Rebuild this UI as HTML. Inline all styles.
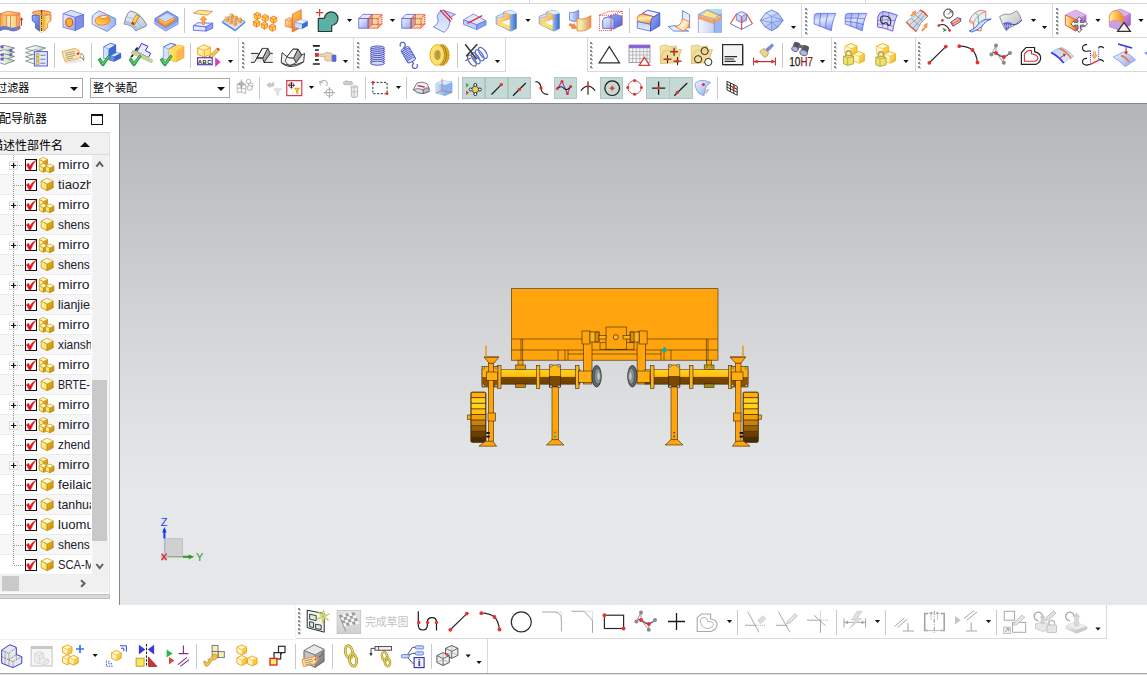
<!DOCTYPE html>
<html lang="zh-CN">
<head>
<meta charset="utf-8">
<title>NX</title>
<style>
html,body{margin:0;padding:0;}
body{width:1147px;height:675px;position:relative;overflow:hidden;background:#fff;font-family:"Liberation Sans","Noto Sans CJK SC",sans-serif;font-size:12px;color:#000;}
.abs{position:absolute;}
.hl{position:absolute;height:1px;background:#d9d9d9;}
.vl{position:absolute;width:1px;background:#d9d9d9;}
#view{position:absolute;left:120px;top:104px;width:1027px;height:501px;background:linear-gradient(to bottom,#b3b5b7 0%,#c2c3c5 20%,#d4d5d6 45%,#e2e3e4 68%,#e6e7e8 77%,#e6e7e8 100%);}
.combo{position:absolute;top:78px;height:18px;border:1px solid #a9a9a9;background:#fff;box-sizing:content-box;}
.combo span{position:absolute;top:1px;font-size:11px;line-height:16px;white-space:nowrap;}
.combo i{position:absolute;right:4.4px;top:7.6px;width:0;height:0;border-left:4.2px solid transparent;border-right:4.2px solid transparent;border-top:4.6px solid #111;}
#nav{position:absolute;left:0;top:104px;width:119px;height:501px;background:#fff;overflow:hidden;}
.row{position:absolute;left:0;width:91px;height:19px;border-bottom:1px solid #ececec;overflow:hidden;}
.row span{position:absolute;left:58px;top:2px;font-size:13px;line-height:16px;color:#20202e;white-space:nowrap;transform-origin:0 50%;}
#done{position:absolute;z-index:5;left:365px;top:614px;font-size:11px;line-height:16px;color:#c2c2c2;white-space:nowrap;letter-spacing:-0.2px}
</style>
</head>
<body>
<!-- toolbar row borders -->
<div class="hl" style="left:0;top:3px;width:1147px"></div>
<div class="hl" style="left:0;top:37px;width:1147px"></div>
<div class="hl" style="left:0;top:71px;width:1147px"></div>
<div class="abs" style="left:0;top:103px;width:1147px;height:1px;background:#7d8a92"></div>
<div class="abs" style="left:119px;top:104px;width:1px;height:501px;background:#7d8a92"></div>

<div id="view"></div>

<!-- selection filter combos -->
<div class="combo" style="left:-8px;width:89px"><span style="left:3.3px">过滤器</span><i></i></div>
<div class="combo" style="left:90px;width:138px"><span style="left:2px">整个装配</span><i></i></div>

<!-- assembly navigator -->
<div id="nav">
  <div class="abs" style="left:-1px;top:7.1px;font-size:12px;line-height:16px;white-space:nowrap">配导航器</div>
  <div class="abs" style="left:91px;top:10px;width:10px;height:8px;border:1px solid #111;border-top:2px solid #111"></div>
  <div class="abs" style="left:-1px;top:28px;width:109px;height:21px;background:#f0f0f0;border:1px solid #dcdcdc"></div>
  <div class="abs" style="left:-9px;top:34px;font-size:12px;line-height:16px;white-space:nowrap">描述性部件名</div>
  <div class="abs" style="left:79.8px;top:37.8px;width:0;height:0;border-left:5.6px solid transparent;border-right:5.6px solid transparent;border-bottom:5.8px solid #111"></div>
  <div class="row" style="top:51px;background:#fff"><span style="transform:scaleX(1.064)">mirro</span></div><div class="row" style="top:71px;background:#f7f7f7"><span style="transform:scaleX(1.02)">tiaozh</span></div><div class="row" style="top:91px;background:#fff"><span style="transform:scaleX(1.064)">mirro</span></div><div class="row" style="top:111px;background:#f7f7f7"><span style="transform:scaleX(0.916)">shens</span></div><div class="row" style="top:131px;background:#fff"><span style="transform:scaleX(1.064)">mirro</span></div><div class="row" style="top:151px;background:#f7f7f7"><span style="transform:scaleX(0.916)">shens</span></div><div class="row" style="top:171px;background:#fff"><span style="transform:scaleX(1.064)">mirro</span></div><div class="row" style="top:191px;background:#f7f7f7"><span style="transform:scaleX(0.957)">lianjie</span></div><div class="row" style="top:211px;background:#fff"><span style="transform:scaleX(1.064)">mirro</span></div><div class="row" style="top:231px;background:#f7f7f7"><span style="transform:scaleX(0.917)">xiansh</span></div><div class="row" style="top:251px;background:#fff"><span style="transform:scaleX(1.064)">mirro</span></div><div class="row" style="top:271px;background:#f7f7f7"><span style="transform:scaleX(0.82)">BRTE-</span></div><div class="row" style="top:291px;background:#fff"><span style="transform:scaleX(1.064)">mirro</span></div><div class="row" style="top:311px;background:#f7f7f7"><span style="transform:scaleX(1.064)">mirro</span></div><div class="row" style="top:331px;background:#fff"><span style="transform:scaleX(0.904)">zhend</span></div><div class="row" style="top:351px;background:#f7f7f7"><span style="transform:scaleX(1.064)">mirro</span></div><div class="row" style="top:371px;background:#fff"><span style="transform:scaleX(1.04)">feilaic</span></div><div class="row" style="top:391px;background:#f7f7f7"><span style="transform:scaleX(0.95)">tanhua</span></div><div class="row" style="top:411px;background:#fff"><span style="transform:scaleX(1.01)">luomu</span></div><div class="row" style="top:431px;background:#f7f7f7"><span style="transform:scaleX(0.916)">shens</span></div><div class="row" style="top:451px;background:#fff"><span style="transform:scaleX(0.863)">SCA-M</span></div>
</div>

<div id="done">完成草图</div>

<svg width="1147" height="675" viewBox="0 0 1147 675" style="position:absolute;left:0;top:0"><defs>
<linearGradient id="gO" x1="0" y1="0" x2="1" y2="0"><stop offset="0" stop-color="#ffeeb4"/><stop offset="0.55" stop-color="#ffb63e"/><stop offset="1" stop-color="#ee8a2a"/></linearGradient>
<linearGradient id="gOv" x1="0" y1="0" x2="0" y2="1"><stop offset="0" stop-color="#fff0b4"/><stop offset="1" stop-color="#f59a30"/></linearGradient>
<linearGradient id="gOd" x1="0" y1="0" x2="1" y2="1"><stop offset="0" stop-color="#fff2b8"/><stop offset="1" stop-color="#f39028"/></linearGradient>
<linearGradient id="gB" x1="0" y1="0" x2="1" y2="1"><stop offset="0" stop-color="#f2f5ff"/><stop offset="1" stop-color="#8fa6ec"/></linearGradient>
<linearGradient id="gBh" x1="0" y1="0" x2="1" y2="0"><stop offset="0" stop-color="#e6ecff"/><stop offset="1" stop-color="#7f96e6"/></linearGradient>
<linearGradient id="gBd" x1="0" y1="0" x2="1" y2="1"><stop offset="0" stop-color="#9db2f2"/><stop offset="1" stop-color="#4c63d2"/></linearGradient>
<linearGradient id="gBv" x1="0" y1="0" x2="0" y2="1"><stop offset="0" stop-color="#bcd0f8"/><stop offset="1" stop-color="#e8eefc"/></linearGradient>
<linearGradient id="gG" x1="0" y1="0" x2="1" y2="1"><stop offset="0" stop-color="#fffac8"/><stop offset="1" stop-color="#f3b400"/></linearGradient>
<linearGradient id="gGh" x1="0" y1="0" x2="1" y2="0"><stop offset="0" stop-color="#ffe680"/><stop offset="1" stop-color="#e8a200"/></linearGradient>
<linearGradient id="gY" x1="0" y1="0" x2="1" y2="1"><stop offset="0" stop-color="#ffffe6"/><stop offset="1" stop-color="#ffd84a"/></linearGradient>
<linearGradient id="gGr" x1="0" y1="0" x2="1" y2="1"><stop offset="0" stop-color="#fafafa"/><stop offset="1" stop-color="#b4b4b4"/></linearGradient>
<linearGradient id="gGrd" x1="0" y1="0" x2="1" y2="1"><stop offset="0" stop-color="#e0e0e0"/><stop offset="1" stop-color="#6c6c6c"/></linearGradient>
<linearGradient id="gP" x1="0" y1="0" x2="1" y2="1"><stop offset="0" stop-color="#e8c4f0"/><stop offset="1" stop-color="#a050c4"/></linearGradient>
<linearGradient id="gCh" x1="0.3" y1="0" x2="0.7" y2="1"><stop offset="0" stop-color="#b4eaf0"/><stop offset="1" stop-color="#9cb4f2"/></linearGradient>
<linearGradient id="gF" x1="0" y1="0" x2="1" y2="1"><stop offset="0" stop-color="#f6e6a8"/><stop offset="1" stop-color="#e2c670"/></linearGradient>
<linearGradient id="gGn" x1="0" y1="0" x2="1" y2="0"><stop offset="0" stop-color="#ffffff"/><stop offset="0.45" stop-color="#eaf6ec"/><stop offset="1" stop-color="#a4d8ae"/></linearGradient>
<linearGradient id="gTl" x1="0" y1="0" x2="1" y2="1"><stop offset="0" stop-color="#fffbc0"/><stop offset="1" stop-color="#ffdc40"/></linearGradient><linearGradient id="gTr" x1="0" y1="0" x2="1" y2="1"><stop offset="0" stop-color="#f0b828"/><stop offset="1" stop-color="#c48404"/></linearGradient><linearGradient id="gEm" x1="0" y1="1" x2="1" y2="0"><stop offset="0" stop-color="#ffe860"/><stop offset="0.5" stop-color="#ffb840"/><stop offset="1" stop-color="#f07a20"/></linearGradient><linearGradient id="gGv" x1="0" y1="0" x2="1" y2="1"><stop offset="0" stop-color="#eef2f8"/><stop offset="1" stop-color="#b4c4dc"/></linearGradient><linearGradient id="gMp" x1="0" y1="0" x2="0.3" y2="1"><stop offset="0" stop-color="#ffd848"/><stop offset="1" stop-color="#f07a30"/></linearGradient><linearGradient id="gSh" x1="0" y1="0" x2="1" y2="0"><stop offset="0" stop-color="#8ab4ec"/><stop offset="1" stop-color="#3a6cc8"/></linearGradient><linearGradient id="gSw" x1="0" y1="0" x2="1" y2="0"><stop offset="0" stop-color="#fbe890"/><stop offset="0.3" stop-color="#e8f0b0"/><stop offset="1" stop-color="#f08a50"/></linearGradient><linearGradient id="gWc" x1="0" y1="0" x2="1" y2="0"><stop offset="0" stop-color="#c8e4fa"/><stop offset="1" stop-color="#7ab4f0"/></linearGradient><linearGradient id="gBl" x1="0" y1="0" x2="0.15" y2="1"><stop offset="0" stop-color="#f8a248"/><stop offset="0.45" stop-color="#fff2b0"/><stop offset="1" stop-color="#f89a40"/></linearGradient><linearGradient id="gFb" x1="0" y1="0.2" x2="1" y2="0.8"><stop offset="0" stop-color="#f8b060"/><stop offset="0.5" stop-color="#fff6d4"/><stop offset="1" stop-color="#f8c070"/></linearGradient><linearGradient id="gCf" x1="0" y1="0" x2="1" y2="0"><stop offset="0" stop-color="#f6f6fa"/><stop offset="1" stop-color="#c4d0f4"/></linearGradient><linearGradient id="gCy" x1="0" y1="0" x2="1" y2="1"><stop offset="0" stop-color="#fff6a0"/><stop offset="1" stop-color="#f8d070"/></linearGradient><linearGradient id="gSf" x1="0" y1="0" x2="0.25" y2="1"><stop offset="0" stop-color="#8c9ef0"/><stop offset="0.45" stop-color="#e4eafc"/><stop offset="1" stop-color="#8fa2f0"/></linearGradient><linearGradient id="gNs" x1="0" y1="0" x2="0" y2="1"><stop offset="0" stop-color="#b4bcf6"/><stop offset="0.6" stop-color="#e4e6f4"/><stop offset="1" stop-color="#dcdce0"/></linearGradient><linearGradient id="gFi" x1="0" y1="0" x2="0" y2="1"><stop offset="0" stop-color="#e4e4e4"/><stop offset="1" stop-color="#d0d0d0"/></linearGradient><linearGradient id="gEx" x1="0" y1="0" x2="1" y2="0"><stop offset="0" stop-color="#f0a040"/><stop offset="0.45" stop-color="#f8eeb0"/><stop offset="0.75" stop-color="#f8d488"/><stop offset="1" stop-color="#f0a040"/></linearGradient><linearGradient id="gRv" x1="0" y1="0" x2="1" y2="0"><stop offset="0" stop-color="#f0b030"/><stop offset="0.6" stop-color="#f8eca0"/><stop offset="1" stop-color="#f0a848"/></linearGradient></defs><rect x="506" y="71" width="81" height="1" fill="#fff"/><rect x="505" y="37" width="1" height="35" fill="#d9d9d9"/><rect x="587" y="37" width="1" height="35" fill="#d9d9d9"/><rect x="801" y="3" width="1" height="35" fill="#d9d9d9"/><rect x="1052" y="3" width="1" height="35" fill="#d9d9d9"/><rect x="238" y="37" width="1" height="35" fill="#d9d9d9"/><rect x="353" y="37" width="1" height="35" fill="#d9d9d9"/><rect x="831" y="37" width="1" height="35" fill="#d9d9d9"/><rect x="915" y="37" width="1" height="35" fill="#d9d9d9"/><rect x="529" y="0" width="1" height="3" fill="#d9d9d9"/><rect x="865" y="0" width="1" height="3" fill="#d9d9d9"/><rect x="0" y="605" width="1147" height="70" fill="#fff"/><rect x="120" y="603" width="1027" height="2" fill="#e6e7e8"/><rect x="295" y="638" width="812" height="1" fill="#d9d9d9"/><rect x="0" y="639" width="295" height="1" fill="#f0f0f0"/><rect x="295" y="605" width="1" height="34" fill="#f2f2f2"/><rect x="1106" y="605" width="1" height="34" fill="#d9d9d9"/><rect x="487" y="639" width="1" height="34" fill="#d9d9d9"/><rect x="0" y="673" width="1147" height="1" fill="#a4a4a4"/><rect x="0" y="674" width="1147" height="1" fill="#e4e4e4"/><g transform="translate(-1.0,8.0)"><path d="M1,6L8.85,3.3L20.9,5.2V20.6Q15,24.6 9.4,21.6Q5,20 1,22.6Z" fill="url(#gEx)" stroke="#e8704a" stroke-width="0.8"/>
<path d="M1,6L8.85,3.3L20.9,5.2L18.3,7.3L8,7.6Z" fill="url(#gOd)" stroke="#e8704a" stroke-width="0.6"/>
<path d="M1,19.6Q5,17.4 9.4,19Q14,21.4 20.9,18.2V20.6Q15,24.6 9.4,21.6Q5,20 1,22.6Z" fill="#5a82e0" stroke="#3a62d0" stroke-width="0.5"/>
<path d="M7.3,7.6V21M11.5,7.6V22.4M17.75,7.3V22.6M18.3,7.3L20.9,5.2" stroke="#e8704a" stroke-width="0.8" fill="none"/>
<path d="M22.5,10V17.7" stroke="#d82a3a" stroke-width="1"/><path d="M21.3,11.8L22.5,9.6L23.8,11.8Z" fill="#d82a3a" stroke="#d82a3a" stroke-width="0.5"/></g><g transform="translate(29.4,8.0)"><path d="M2.8,7.3H10.4V23.2L6.2,20.1V15.4L2.8,12.5Z" fill="url(#gBd)" stroke="#2a4ac0" stroke-width="0.8"/>
<path d="M14.1,7.3L21.6,6.7V12.5L18.2,15.4V19.8L14.1,23.2Z" fill="url(#gRv)" stroke="#e8704a" stroke-width="0.8"/>
<rect x="10.4" y="7" width="3.7" height="16.2" fill="#f8c838"/>
<ellipse cx="12.2" cy="4.9" rx="9.4" ry="2.3" fill="#f8d860" stroke="#e8704a" stroke-width="0.8"/>
<path d="M4,4.6Q12.2,2 20.4,4.6M6,6.2L12.2,4.9L18.4,6.2M12.2,2.6V7.2" fill="none" stroke="#e84a3a" stroke-width="0.7" stroke-dasharray="1.4 0.8"/>
<path d="M12.2,2V24.5" stroke="#333" stroke-width="0.9" stroke-dasharray="3 1 1 1"/></g><g transform="translate(61.3,8.0)"><path d="M1.7,5.7L9.9,2.3L22.3,6.6L14,9.4Z" fill="#d8e2f6" stroke="#6a78d8" stroke-width="0.8"/>
<path d="M1.7,5.7L14,9.4L14,22.6L1.7,19.3Z" fill="url(#gB)" stroke="#6a78d8" stroke-width="0.8"/>
<path d="M14,9.4L22.3,6.6L22.3,18.5L14,22.6Z" fill="#7d8fe6" stroke="#5a68d0" stroke-width="0.8"/>
<ellipse cx="7.9" cy="14.4" rx="3.5" ry="4.2" fill="#ffb030" stroke="#e8402a" stroke-width="1"/></g><g transform="translate(92.0,8.0)"><path d="M0.2,8L6.9,2.6L23.6,10.6V16.8L15.2,23.5L0.2,16Z" fill="url(#gBh)" fill-opacity="0.75" stroke="#5a8ae2" stroke-width="0.9"/>
<path d="M0.4,8.2L15.2,16.6L23.4,10.8" fill="none" stroke="#9ab8f0" stroke-width="0.5"/>
<ellipse cx="10.6" cy="12.4" rx="7.6" ry="4.7" transform="rotate(-8 10.6 12.4)" fill="url(#gEm)" stroke="#f07a24" stroke-width="0.9"/>
<ellipse cx="11.6" cy="9" rx="3.8" ry="1.5" transform="rotate(-6 11.6 9)" fill="#f8f0a8" stroke="#f06a30" stroke-width="0.7"/></g><g transform="translate(123.0,8.0)"><path d="M1,16L3.1,8.9Q5,4.4 7.3,2.9Q17.4,4.6 23.6,16.8L22.7,18.5Q17,20 12.7,23.1Q9,16.6 1,16Z" fill="url(#gGv)" stroke="#7a7a8a" stroke-width="0.9"/>
<path d="M3.1,8.9Q13,9.6 19,20M1.8,13.4Q10,13.4 14.6,21.6" fill="none" stroke="#9ab0cc" stroke-width="0.7"/>
<path d="M1,16L1.8,13.4Q10,13.4 14.6,21.6L12.7,23.1Q9,16.6 1,16Z" fill="#a8bcdc" fill-opacity="0.8"/>
<path d="M8.4,15.4L13.4,6.6L16.6,8.2L11.4,17Z" fill="#f2c234" stroke="#b4841c" stroke-width="0.8"/>
<path d="M10,14.6L14,7.8" stroke="#fff0a0" stroke-width="0.8"/>
<circle cx="10" cy="15.4" r="1.4" fill="#e02a2a"/></g><g transform="translate(154.5,8.0)"><path d="M0.45,10.5L12.6,3L23.5,9.3V16L11.3,23.1L0.45,16Z" fill="#7a9aea" stroke="#5a7ae0" stroke-width="0.9"/>
<path d="M2.6,10.6L12.6,5L21.4,9.6L11.2,16.6Z" fill="#ccd8f8" stroke="#8aa4ee" stroke-width="0.5"/>
<path d="M0.45,16L11.3,23.1L23.5,16V13.4L11.3,20.4L0.45,13.4Z" fill="#a8bcf2" fill-opacity="0.8"/>
<path d="M4.2,10.4L10.9,14.2L19.7,9.2V13.2L10.9,18.6L4.2,14.6Z" fill="#ff9a28" stroke="#f06a20" stroke-width="0.7"/>
<path d="M4.8,11.6L10.9,15.2L19.2,10.4" fill="none" stroke="#ffe060" stroke-width="1"/></g><rect x="184" y="8" width="1" height="25" fill="#c8c8c8"/><g transform="translate(191.0,8.0)"><path d="M2.4,5.1L8.3,2.2L21.7,3.4L15.8,7.2Z" fill="#eef08c" stroke="#f0865a" stroke-width="0.9"/>
<path d="M2.4,17.7L7,14.7L21.7,15.2L15,18.9Z" fill="#eef2ff" stroke="#6468f4" stroke-width="0.9"/>
<path d="M2.4,17.7L15,18.9V23.1L2.4,22.3Z" fill="#dfe8fc" stroke="#6468f4" stroke-width="0.9"/>
<path d="M15,18.9L21.7,15.2V20.2L15,23.1Z" fill="#8ea2f2" stroke="#6468f4" stroke-width="0.9"/>
<path d="M11.2,16.4V11.8H9.1L12.5,8L15.8,11.8H13.7V16.4Z" fill="#ffb040" stroke="#ee7a20" stroke-width="0.7"/></g><g transform="translate(221.0,8.0)"><path d="M1.3,13.5L10.5,7.2L23.9,13.5V14.8L14.3,23L1.3,14.8Z" fill="#4f7ee4" stroke="#3f6ee0" stroke-width="0.6"/>
<path d="M1.3,13.5L10.5,7.2L23.9,13.5L14.3,21.8Z" fill="url(#gBv)" stroke="#5f8ae8" stroke-width="0.6"/><rect x="8.8" y="5.9" width="3.4" height="4.8" rx="0.9" fill="url(#gO)" stroke="#e88a2a" stroke-width="0.6"/><rect x="9.9" y="7.9" width="1.2" height="1.4" fill="#b08a9a"/><rect x="4.2" y="8.9" width="3.4" height="4.8" rx="0.9" fill="url(#gO)" stroke="#e88a2a" stroke-width="0.6"/><rect x="5.300000000000001" y="10.9" width="1.2" height="1.4" fill="#b08a9a"/><rect x="13" y="8" width="3.4" height="4.8" rx="0.9" fill="url(#gO)" stroke="#e88a2a" stroke-width="0.6"/><rect x="14.1" y="10" width="1.2" height="1.4" fill="#b08a9a"/><rect x="17.2" y="10.1" width="3.4" height="4.8" rx="0.9" fill="url(#gO)" stroke="#e88a2a" stroke-width="0.6"/><rect x="18.3" y="12.1" width="1.2" height="1.4" fill="#b08a9a"/><rect x="8" y="11" width="3.4" height="4.8" rx="0.9" fill="url(#gO)" stroke="#e88a2a" stroke-width="0.6"/><rect x="9.1" y="13" width="1.2" height="1.4" fill="#b08a9a"/><rect x="12.2" y="13.1" width="3.4" height="4.8" rx="0.9" fill="url(#gO)" stroke="#e88a2a" stroke-width="0.6"/><rect x="13.299999999999999" y="15.1" width="1.2" height="1.4" fill="#b08a9a"/></g><g transform="translate(253.0,8.0)"><path d="M1.1,6.0920000000000005L4.300000000000001,4.3L7.5,6.0920000000000005L7.5,9.772L4.300000000000001,11.564L1.1,9.772Z" fill="#ffd23c" stroke="#f0602a" stroke-width="0.7"/><path d="M1.1,6.0920000000000005L4.300000000000001,7.884L7.5,6.0920000000000005M4.300000000000001,7.884V11.564" fill="none" stroke="#f0602a" stroke-width="0.7"/><path d="M9.05,8.192L12.25,6.4L15.450000000000001,8.192L15.450000000000001,11.872L12.25,13.664000000000001L9.05,11.872Z" fill="#ffd23c" stroke="#f0602a" stroke-width="0.7"/><path d="M9.05,8.192L12.25,9.984000000000002L15.450000000000001,8.192M12.25,9.984000000000002V13.664000000000001" fill="none" stroke="#f0602a" stroke-width="0.7"/><path d="M17.4,9.792L20.599999999999998,8L23.799999999999997,9.792L23.799999999999997,13.472L20.599999999999998,15.264L17.4,13.472Z" fill="#ffd23c" stroke="#f0602a" stroke-width="0.7"/><path d="M17.4,9.792L20.599999999999998,11.584L23.799999999999997,9.792M20.599999999999998,11.584V15.264" fill="none" stroke="#f0602a" stroke-width="0.7"/><path d="M0.3,13.592L3.5,11.8L6.7,13.592L6.7,17.272L3.5,19.064L0.3,17.272Z" fill="#ffd23c" stroke="#f0602a" stroke-width="0.7"/><path d="M0.3,13.592L3.5,15.384L6.7,13.592M3.5,15.384V19.064" fill="none" stroke="#f0602a" stroke-width="0.7"/><path d="M8.2,15.692L11.399999999999999,13.9L14.6,15.692L14.6,19.372L11.399999999999999,21.164L8.2,19.372Z" fill="#ffd23c" stroke="#f0602a" stroke-width="0.7"/><path d="M8.2,15.692L11.399999999999999,17.484L14.6,15.692M11.399999999999999,17.484V21.164" fill="none" stroke="#f0602a" stroke-width="0.7"/><path d="M16.2,17.792L19.4,16L22.6,17.792L22.6,21.472L19.4,23.264L16.2,21.472Z" fill="#ffd23c" stroke="#f0602a" stroke-width="0.7"/><path d="M16.2,17.792L19.4,19.584L22.6,17.792M19.4,19.584V23.264" fill="none" stroke="#f0602a" stroke-width="0.7"/></g><g transform="translate(284.0,8.0)"><path d="M1.3,11.8L5,9.7L8.4,10.6V20L1.3,18.4Z" fill="url(#gOd)" stroke="#f0703a" stroke-width="0.7"/>
<path d="M1.3,11.8L5.6,13L8.4,12" fill="none" stroke="#f0703a" stroke-width="0.6"/>
<path d="M8.4,6.4L17.2,1.8V19.3L8.4,23.9Z" fill="url(#gMp)" stroke="#f05a28" stroke-width="0.8"/>
<path d="M10.5,14.3L16.7,11.4L23.8,13.1L18,16Z" fill="#eef2fc" stroke="#7f98e8" stroke-width="0.5"/>
<path d="M10.5,14.3L18,16V21L10.9,19.3Z" fill="url(#gBv)" stroke="#7f98e8" stroke-width="0.5"/>
<path d="M18,16L23.8,13.1V18.1L18,21Z" fill="#3a6ae0"/></g><g transform="translate(315.0,8.0)"><path d="M3.3,10.4H9.6A6.7,6.7 0 1 1 16.7,17.24V23.5H3.3Z" fill="#56b4a7" stroke="#333" stroke-width="1.2" stroke-linejoin="round"/>
<path d="M9.8,10.4H16.7V17" fill="none" stroke="#9aa6a4" stroke-width="0.9"/>
<path d="M4.6,0.9v7.6M0.8,4.7h7.6" stroke="#d83a3a" stroke-width="1.2"/></g><path d="M346.9,19h5.2l-2.6,3.1z" fill="#111"/><g transform="translate(358.5,8.0)"><path d="M0.3,10.6L4.4,6.4H13.8L9.7,10.6Z" fill="#e4eaff" stroke="#5562e0" stroke-width="0.8"/>
<rect x="0.3" y="10.6" width="9.4" height="9.6" fill="url(#gB)" stroke="#5562e0" stroke-width="0.8"/>
<path d="M9.7,10.6L13.8,6.4H23.4V16.2L19.6,20.2H9.7Z" fill="#f7cd96" fill-opacity="0.9"/>
<path d="M9.7,10.6L13.8,6.4V16.4L9.7,20.2Z" fill="#b6a8a8" stroke="#e02424" stroke-width="0.8" stroke-dasharray="1.2 0.8"/>
<path d="M9.7,10.6H19.6V20.2H9.7ZM13.8,6.4H23.4V16.2L19.6,20.2M19.6,10.6L23.4,6.4M13.8,16.4H23" fill="none" stroke="#e02424" stroke-width="0.9" stroke-dasharray="1.2 0.8"/></g><path d="M389.9,19h5.2l-2.6,3.1z" fill="#111"/><g transform="translate(401.5,8.0)"><path d="M0.3,10.6L4.4,6.4H13.8L9.7,10.6Z" fill="#e4eaff" stroke="#5562e0" stroke-width="0.8"/>
<rect x="0.3" y="10.6" width="9.4" height="9.6" fill="url(#gB)" stroke="#5562e0" stroke-width="0.8"/>
<path d="M9.7,10.6L13.8,6.4H23.4V16.2L19.6,20.2H9.7Z" fill="#f7cd96" fill-opacity="0.9"/>
<path d="M9.7,10.6L13.8,6.4V16.4L9.7,20.2Z" fill="#b6a8a8" stroke="#e02424" stroke-width="0.8" stroke-dasharray="1.2 0.8"/>
<path d="M9.7,10.6H19.6V20.2H9.7ZM13.8,6.4H23.4V16.2L19.6,20.2M19.6,10.6L23.4,6.4M13.8,16.4H23" fill="none" stroke="#e02424" stroke-width="0.9" stroke-dasharray="1.2 0.8"/></g><g transform="translate(432.5,8.0)"><path d="M8,3Q4,7 4.7,9.5Q6,12 5.5,14Q4.5,17 0.9,18.9L11.4,24.4Q16,21 16.8,17Q18,14 16.6,10.6L18.1,8.9L23.1,6.4L10.6,2.2Z" fill="url(#gBv)" stroke="#5a6ee6" stroke-width="0.8"/>
<path d="M7.6,2.2L18.1,13.5M11,1.8L19.8,11.4" stroke="#e02a3a" stroke-width="1.2"/></g><g transform="translate(463.0,8.0)"><path d="M0.5,11.9L10.4,6L23,12.7L13.7,16.8Z" fill="#dfe8fc" stroke="#5f78e4" stroke-width="0.8"/>
<path d="M0.5,11.9L13.7,16.8V21.6L0.5,16.4Z" fill="#c0d0f6" stroke="#5f78e4" stroke-width="0.8"/>
<path d="M13.7,16.8L23,12.7V17L13.7,21.6Z" fill="#8aa2ec" stroke="#5f78e4" stroke-width="0.8"/>
<path d="M4.4,15.4L19.2,7.6" stroke="#e83030" stroke-width="1.2"/></g><g transform="translate(494.0,8.0)"><path d="M2.2,8.5L8.9,5.9L9.7,3.9L15.6,2.6Q20,2.6 22.3,5.5V20.6L16.8,23.1L2.2,16Z" fill="url(#gBh)" stroke="#6a90d8" stroke-width="0.8"/>
<path d="M16.4,6.4L22.3,5.5V20.6L16.8,23.1Z" fill="url(#gSh)"/>
<path d="M9.7,3.9L15.6,2.6Q20,2.6 22.3,5.5L16.4,6.4Z" fill="#dfeaf8"/>
<path d="M3.2,9.8L9.9,8.4V4.9L15.8,6.2V22L3.2,16.2Z" fill="url(#gOd)" stroke="#e8a050" stroke-width="0.5"/>
<path d="M3.2,16.2L8,13.9L12.2,16.8L15.6,17.7V22Z" fill="#f8e468"/>
<path d="M8,13.9L15.6,11.4V17.7L12.2,16.8Z" fill="#fff"/>
<path d="M2.2,8.5L8.9,5.9L9.7,7V8.5L3.2,9.9Z" fill="#dfeaf8" stroke="#7a9ae0" stroke-width="0.5"/></g><path d="M525.4,19h5.2l-2.6,3.1z" fill="#111"/><g transform="translate(537.0,8.0)"><path d="M2.2,8.5L8.9,5.9L9.7,3.9L15.6,2.6Q20,2.6 22.3,5.5V20.6L16.8,23.1L2.2,16Z" fill="url(#gBh)" stroke="#6a90d8" stroke-width="0.8"/>
<path d="M16.4,6.4L22.3,5.5V20.6L16.8,23.1Z" fill="url(#gSh)"/>
<path d="M9.7,3.9L15.6,2.6Q20,2.6 22.3,5.5L16.4,6.4Z" fill="#dfeaf8"/>
<path d="M3.2,9.8L9.9,8.4V4.9L15.8,6.2V22L3.2,16.2Z" fill="url(#gOd)" stroke="#e8a050" stroke-width="0.5"/>
<path d="M3.2,16.2L8,13.9L12.2,16.8L15.6,17.7V22Z" fill="#f8e468"/>
<path d="M8,13.9L15.6,11.4V17.7L12.2,16.8Z" fill="#fff"/>
<path d="M2.2,8.5L8.9,5.9L9.7,7V8.5L3.2,9.9Z" fill="#dfeaf8" stroke="#7a9ae0" stroke-width="0.5"/></g><g transform="translate(568.0,8.0)"><path d="M1.5,4.4Q6,5.4 10.7,2.2V12.6Q6,14.4 1.5,12.2Z" fill="url(#gBh)" stroke="#5a7ee0" stroke-width="0.8"/>
<path d="M9,10.4Q16,12.6 22.8,7.6V19.6Q16,24.4 9,22.6Z" fill="url(#gSw)" stroke="#ee7a3a" stroke-width="0.8"/>
<path d="M1.8,15.4L5.4,17L6,15.4L8.6,20.2L3.4,20.6L4.4,19L1,17.2Z" fill="#ff8a30" stroke="#ee5a20" stroke-width="0.5"/></g><g transform="translate(599.0,8.0)"><path d="M3.8,12.4 Q4,9.6 8,9.2L17,6.4L23,8.2V17L15,20.4H3.8Z" fill="url(#gBd)" stroke="#5a6cd8" stroke-width="0.7"/>
<path d="M3.8,20.4V12.6 Q4.2,9.6 8.4,9.4 Q13,9 15,12V20.4Z" fill="url(#gB)" stroke="#5a6cd8" stroke-width="0.7"/>
<path d="M0.6,7.2H12V22.6H0.6ZM0.6,7.2L10,3.3H23.2V16.6L12,22.6M12,7.2L23.2,3.3" fill="none" stroke="#e42828" stroke-width="0.9" stroke-dasharray="1.1 1"/></g><rect x="629" y="8" width="1" height="25" fill="#c8c8c8"/><g transform="translate(636.5,8.0)"><path d="M5.8,5.5L11.2,2.2L23.3,5.1L17.5,8.9Z" fill="#f0f2fc" stroke="#3a44e0" stroke-width="0.9"/>
<path d="M0.75,10.1Q1.2,6.6 5.4,5.9L17.5,8.9Q14.8,9.8 14.6,12.6L14.1,16.4L0.75,13.5Z" fill="url(#gBl)" stroke="#ee5a30" stroke-width="0.8"/>
<path d="M0.75,13.5L14.1,16.4V23.1L0.75,20.2Z" fill="url(#gBv)" stroke="#4a6ad8" stroke-width="0.8"/>
<path d="M17.5,8.9L23.3,5.1V17.7L14.1,23.1V16.4L14.6,12.6Q14.8,9.8 17.5,8.9Z" fill="url(#gBd)" stroke="#3a4ed8" stroke-width="0.8"/></g><g transform="translate(667.0,8.0)"><path d="M15.4,2.6L22.6,6.8V20.2L15.4,16Z" fill="#e4ecf8" stroke="#4a74d8" stroke-width="0.8"/>
<path d="M1.2,18.5L8.6,17.6L21.7,23.1H6.7Z" fill="#e4ecf8" stroke="#4a74d8" stroke-width="0.8"/>
<path d="M8.3,18.5Q14.6,17.4 15.4,10.5L22.6,13.9Q22,20.6 15.9,23.1Z" fill="url(#gFb)" stroke="#ee6a3a" stroke-width="0.8"/></g><g transform="translate(698.0,8.0)"><path d="M9.1,1H24V24.8H0.2V6.4Z" fill="url(#gCh)"/>
<path d="M0.35,10.5L16.2,15.6V24.8H0.35Z" fill="url(#gCf)"/>
<path d="M16.2,15.6L23.8,9.7V24.8H16.2Z" fill="#9ab6f2"/>
<path d="M0.75,9.7L1.6,8L16.2,12.6L23.4,8.5L23.8,9.7L16.2,15.6L0.35,10.5Z" fill="#f6a860" stroke="#f08a5a" stroke-width="0.6"/>
<path d="M1.6,8L9.1,2.6L23.4,8.5L16.2,12.6Z" fill="url(#gCy)" stroke="#f0905a" stroke-width="0.6"/>
<path d="M0.35,24.8V6.4L9.1,1.8L23.8,8M0.35,6.4L16.2,11V24.8M16.2,11L23.8,5.6" fill="none" stroke="#6a7ee0" stroke-width="0.6"/></g><g transform="translate(729.5,8.0)"><path d="M0.8,15.7L12.1,21.4L22.95,15.7" fill="none" stroke="#4f6ad8" stroke-width="0.9"/>
<path d="M6.9,5.95L12.1,3.4L17.1,5.95V12.2L12.1,14.7L6.9,12.2Z" fill="url(#gB)" stroke="#5a78dc" stroke-width="0.8"/>
<path d="M6.9,5.95L12.1,8.5L17.1,5.95" fill="#e8f0fa" stroke="#5a78dc" stroke-width="0.7"/>
<path d="M7,5.95L0.8,15.7M12.1,8.5V21.4M17.1,5.95L22.95,15.7" stroke="#f05030" stroke-width="1.2" fill="none"/></g><g transform="translate(759.7,8.0)"><path d="M0.6,12.4L6,5L12,2L18.6,5.4L23.4,12.4L18,19.4L12,22.8L5.4,19Z" fill="url(#gB)" stroke="#5a78dc" stroke-width="0.9"/>
<path d="M6,5L12,8.4L18.6,5.4M12,8.4V22.8M0.6,12.4L12,14.4L23.4,12.4M5.4,19L12,14.4L18,19.4M0.6,12.4L12,8.4L23.4,12.4" fill="none" stroke="#6f8ae2" stroke-width="0.7"/></g><path d="M790.9,26h5.2l-2.6,3.1z" fill="#111"/><rect x="806" y="9" width="2" height="2" fill="#cfcfcf"/><rect x="805" y="8" width="2" height="2" fill="#8e8e8e"/><rect x="806" y="13" width="2" height="2" fill="#cfcfcf"/><rect x="805" y="12" width="2" height="2" fill="#8e8e8e"/><rect x="806" y="17" width="2" height="2" fill="#cfcfcf"/><rect x="805" y="16" width="2" height="2" fill="#8e8e8e"/><rect x="806" y="21" width="2" height="2" fill="#cfcfcf"/><rect x="805" y="20" width="2" height="2" fill="#8e8e8e"/><rect x="806" y="25" width="2" height="2" fill="#cfcfcf"/><rect x="805" y="24" width="2" height="2" fill="#8e8e8e"/><rect x="806" y="29" width="2" height="2" fill="#cfcfcf"/><rect x="805" y="28" width="2" height="2" fill="#8e8e8e"/><rect x="806" y="33" width="2" height="2" fill="#cfcfcf"/><rect x="805" y="32" width="2" height="2" fill="#8e8e8e"/><g transform="translate(813.0,8.0)"><path d="M1.2,16V8.4Q1.4,5.6 3.6,5.4H22.9Q19.4,12 18.3,22.7Z" fill="url(#gSf)" stroke="#5a6ce4" stroke-width="0.8"/>
<path d="M7.9,5.4Q6.2,11 6.9,18.4M15,5.4Q12.6,12 12.7,20.6" fill="none" stroke="#5a6ce4" stroke-width="0.8"/></g><g transform="translate(844.0,8.0)"><path d="M1.2,16V8.4Q1.4,5.6 3.6,5.4H22.9Q19.4,12 18.3,22.7Z" fill="url(#gSf)" stroke="#5a6ce4" stroke-width="0.8"/>
<path d="M7.9,5.4Q6.2,11 6.9,18.4M15,5.4Q12.6,12 12.7,20.6M1.2,10.2Q11,9.6 21.2,10.8M1.2,13.4Q10,13.6 19.8,16.6" fill="none" stroke="#5a6ce4" stroke-width="0.8"/></g><g transform="translate(875.0,8.0)"><path d="M2.8,8.9Q4,4.4 7.8,3.4Q15,4 22.4,7.2Q19,13 17.8,23.1Q10,20 2.4,18.9Z" fill="url(#gNs)" stroke="#6a4af0" stroke-width="0.9"/>
<path d="M2.6,12.6Q11,11 20.4,12.6M2.5,16Q10,15.6 18.6,18.4M8,3.6Q7,11 7.4,19.8M14,4.6Q12.6,12 12.6,21.4" fill="none" stroke="#7a5af0" stroke-width="0.7"/>
<path d="M5.6,11.4Q5.2,8.2 9,8Q13.6,7.8 15,10.4Q16.6,13.6 15.2,16.6Q13.4,18.4 12.4,16Q11,13.6 9,15.4Q6,16.4 5.6,11.4Z" fill="none" stroke="#333" stroke-width="1.2"/></g><g transform="translate(905.0,8.0)"><path d="M1.3,13.9Q9,9 15.1,2.2Q20,4 22.6,8.5Q15,14 11.3,23.5Q5,19 1.3,13.9Z" fill="url(#gGv)" stroke="#6a6a7a" stroke-width="0.6"/>
<path d="M4.6,16.8Q12,12 18,3.6M8,20.4Q14,13.6 20.6,5.8M6.4,10.6Q10.6,13.6 14,17.6M10.4,7Q14.6,10 17.6,13" fill="none" stroke="#7a7a86" stroke-width="0.6"/>
<path d="M1.3,13.9Q5,19 11.3,23.5M15.1,2.2Q20,4 22.6,8.5" fill="none" stroke="#f0522a" stroke-width="1.4"/>
<path d="M5.4,7.6L8.2,5L7.4,4.2L11,3L10.2,6.8L9.4,6L6.6,8.6Z" fill="#ffa030" stroke="#ee6a20" stroke-width="0.5"/>
<path d="M16.6,22.4L19.8,18.4L18.8,17.6L22.2,15.2L21.8,19.6L20.9,19L17.8,23.2Z" fill="#ffa030" stroke="#ee6a20" stroke-width="0.5"/></g><g transform="translate(937.0,8.0)"><circle cx="11.4" cy="5.6" r="4.6" fill="#fff" stroke="#2a2a2a" stroke-width="1"/>
<path d="M10.6,6.8L13.8,3.6" stroke="#c02020" stroke-width="0.8"/><path d="M11.8,2.6L14.8,2.6L14.6,5.6Z" fill="#28a040"/>
<path d="M1.8,17.6 Q8.4,14 12.6,22" fill="none" stroke="#222" stroke-width="1.1"/>
<circle cx="5.4" cy="12.4" r="1.3" fill="#e02a2a"/><circle cx="1.8" cy="17.6" r="1.3" fill="#e02a2a"/><circle cx="12.6" cy="22.4" r="1.3" fill="#e02a2a"/>
<path d="M5.8,20.2L9.4,22L6.4,23.6L7.2,22.2Z" fill="#28a040" stroke="#1a7a2a" stroke-width="0.5"/>
<path d="M13.6,14.4L20.4,9.6L24,10.8L23.4,13.6L16,18.2Z" fill="#ffc080" stroke="#3a3ae0" stroke-width="0.9"/>
<path d="M13.6,14.4L16.2,15.4L16,18.2M16.2,15.4L23.6,11" fill="none" stroke="#e03a2a" stroke-width="0.8"/></g><g transform="translate(968.0,8.0)"><path d="M1.5,12.6Q4,5 12.3,2.2L17.8,3.4V10.5Q14,14 13,23L5.6,22V14.7Z" fill="#e8f0ec" stroke="#e05a5a" stroke-width="0.8"/>
<path d="M5.6,14.7Q9,6.6 17.8,3.4M1.5,12.6V14L5.6,16.4" fill="none" stroke="#e05a5a" stroke-width="0.7"/>
<path d="M7.3,5.1L10.4,7.4V15.6L14.6,18" fill="none" stroke="#40c8c0" stroke-width="1"/>
<path d="M1.5,23.1Q8,20 10.4,16Q14,11 23.2,11Q18,13 16,15.6Q12,21.6 3.5,24Z" fill="#d4e0f8" fill-opacity="0.9" stroke="#3a6ad8" stroke-width="1"/></g><g transform="translate(999.0,8.0)"><path d="M0.6,8.6 Q6,4.6 10.6,6.4 Q15,5 17.6,2.8 Q21,6 22.6,12.4 Q19,14 15.4,17.6 Q12,18.4 7,22.6 Q3,17 0.6,8.6Z" fill="url(#gGr)" stroke="#7a7a7a" stroke-width="0.8"/>
<path d="M4.4,15.6 Q10,13.6 13.4,16.4 Q18,17.6 22.6,12.4" fill="none" stroke="#3a3ac8" stroke-width="1"/>
<path d="M5,16 Q9,14.6 12.4,16.6 Q11,19 7.4,21.6 Q6,19 5,16Z" fill="#5a66e0" stroke="#3a3ac8" stroke-width="0.6"/>
<path d="M6.4,16V20M8.6,15.6V20.6M10.6,16V19M5.6,18H11.4" stroke="#dfe4ff" stroke-width="0.5"/></g><path d="M1030.9,19h5.2l-2.6,3.1z" fill="#111"/><path d="M1041.9,26h5.2l-2.6,3.1z" fill="#111"/><rect x="1057" y="9" width="2" height="2" fill="#cfcfcf"/><rect x="1056" y="8" width="2" height="2" fill="#8e8e8e"/><rect x="1057" y="13" width="2" height="2" fill="#cfcfcf"/><rect x="1056" y="12" width="2" height="2" fill="#8e8e8e"/><rect x="1057" y="17" width="2" height="2" fill="#cfcfcf"/><rect x="1056" y="16" width="2" height="2" fill="#8e8e8e"/><rect x="1057" y="21" width="2" height="2" fill="#cfcfcf"/><rect x="1056" y="20" width="2" height="2" fill="#8e8e8e"/><rect x="1057" y="25" width="2" height="2" fill="#cfcfcf"/><rect x="1056" y="24" width="2" height="2" fill="#8e8e8e"/><rect x="1057" y="29" width="2" height="2" fill="#cfcfcf"/><rect x="1056" y="28" width="2" height="2" fill="#8e8e8e"/><rect x="1057" y="33" width="2" height="2" fill="#cfcfcf"/><rect x="1056" y="32" width="2" height="2" fill="#8e8e8e"/><g transform="translate(1064.0,8.0)"><path d="M1.4,7L11.6,2L22,7V17L11.6,23L1.4,17Z" fill="url(#gP)" stroke="#a860c8" stroke-width="0.7"/>
<path d="M1.4,7L11.6,2L22,7L11.6,11.4Z" fill="#dcb4ec"/>
<path d="M1.4,7L11.6,11.4V23L1.4,17Z" fill="url(#gO)" stroke="#e8502a" stroke-width="0.8"/>
<g transform="translate(1.6,0.8)"><path d="M13.6,8L16.6,11.2H14.8V13.6H18.6V11.8L22,15L18.6,18.2V16.4H14.8V20.4H16.6L13.6,23.6L10.6,20.4H12.4V16.4H8.6V18.2L5.2,15L8.6,11.8V13.6H12.4V11.2H10.6Z" fill="#f8f8f8" stroke="#555" stroke-width="0.9"/></g></g><path d="M1095.4,19h5.2l-2.6,3.1z" fill="#111"/><g transform="translate(1108.0,8.0)"><path d="M1.4,8.4 Q2,3.6 8,2.4L12.6,1.2L22.4,5.6V17L12,22.4L1.4,18.6Z" fill="url(#gP)" stroke="#a060c0" stroke-width="0.7"/>
<path d="M12.6,1.2L22.4,5.6L15.4,8.6 Q12,5 8,2.4Z" fill="#d8b0e8"/>
<path d="M1.4,14.4V8.4 Q2,3.6 8,2.4 Q13,4 15.4,8.6V15.4 Q8,9.6 1.4,14.4Z" fill="url(#gO)" stroke="#e8902a" stroke-width="0.7"/>
<path d="M1.4,14.4 Q8,9.6 15.4,15.4V21L12,22.4L1.4,18.6Z" fill="#c8a0dc"/>
<path d="M16,14.6L22.4,23.4H9.6Z" fill="#f4f4f4" stroke="#333" stroke-width="1.3"/></g><path d="M1138.4,19h5.2l-2.6,3.1z" fill="#111"/><g transform="translate(-6.0,43.0)"><path d="M0.6,5.4L10.4,2.4L20.6,5.0L10.6,8.8Z" fill="url(#gGn)" stroke="#62726a" stroke-width="0.7"/><path d="M0.6,9.6L10.4,6.6L20.6,9.2L10.6,13.0Z" fill="url(#gGn)" stroke="#62726a" stroke-width="0.7"/><path d="M0.6,13.8L10.4,10.8L20.6,13.4L10.6,17.200000000000003Z" fill="url(#gGn)" stroke="#62726a" stroke-width="0.7"/><path d="M0.6,18L10.4,15L20.6,17.6L10.6,21.4Z" fill="url(#gGn)" stroke="#62726a" stroke-width="0.7"/>
<rect x="6.6" y="2.4" width="3" height="3" fill="#7a5ad0"/><rect x="15.4" y="6" width="3" height="3" fill="#7a5ad0"/><rect x="6.8" y="10.4" width="3" height="3" fill="#7a5ad0"/><rect x="15.6" y="10.6" width="2.6" height="2.6" fill="#7a5ad0"/><rect x="6.8" y="14.6" width="3" height="3" fill="#7a5ad0"/></g><g transform="translate(25.0,43.0)"><path d="M0.6,5.4L10.4,2.4L20.6,5.0L10.6,8.8Z" fill="url(#gGn)" stroke="#62726a" stroke-width="0.7"/><path d="M0.6,9.6L10.4,6.6L20.6,9.2L10.6,13.0Z" fill="url(#gGn)" stroke="#62726a" stroke-width="0.7"/><path d="M0.6,13.8L10.4,10.8L20.6,13.4L10.6,17.200000000000003Z" fill="url(#gGn)" stroke="#62726a" stroke-width="0.7"/><path d="M0.6,18L10.4,15L20.6,17.6L10.6,21.4Z" fill="url(#gGn)" stroke="#62726a" stroke-width="0.7"/>
<rect x="9.4" y="8.6" width="13" height="14.4" fill="#e4ecff" stroke="#5a5ad8" stroke-width="1"/>
<rect x="11.2" y="10.8" width="2.8" height="2.8" fill="#f6e060" stroke="#8a7a20" stroke-width="0.5"/><rect x="11.2" y="14.8" width="2.8" height="2.8" fill="#f6e060" stroke="#8a7a20" stroke-width="0.5"/><rect x="11.2" y="18.8" width="2.8" height="2.8" fill="#f6e060" stroke="#8a7a20" stroke-width="0.5"/>
<path d="M15.4,12.2H20.4M15.4,16.2H20.4M15.4,20.2H20.4" stroke="#6a6a8a" stroke-width="0.9"/></g><rect x="54" y="43" width="1" height="25" fill="#c8c8c8"/><g transform="translate(60.0,43.0)"><path d="M21,10.6 Q24.6,11 23.6,17.6 Q22.6,14 20,14.6" fill="none" stroke="#6a6a6a" stroke-width="0.8"/>
<path d="M2,8.6L15,5.4L19,7.6L21,12.6L18.6,15.6L5,18.6Z" fill="#fbe6b4" stroke="#f0a050" stroke-width="0.9"/>
<path d="M5,10.4L14.6,8.2M5.4,12.4L15,10.2M5.8,14.4L15.4,12.2M6.2,16.4L13,14.8" stroke="#8a8266" stroke-width="0.7"/>
<circle cx="18" cy="10.6" r="1.2" fill="#c03030"/>
<path d="M5,19L18.6,16 Q21,16.6 22,18.6 Q14,21 6,20.4Z" fill="#d8d8d8" fill-opacity="0.6"/></g><rect x="91" y="43" width="1" height="25" fill="#c8c8c8"/><g transform="translate(97.0,43.0)"><path d="M6.5,4.1L13.6,0.4L18.7,2V10.4L23.7,10.4V15L17,18.3L12.8,17.1L11.6,16.7L6.5,15Z" fill="url(#gBd)" stroke="#2a5ad8" stroke-width="0.8"/>
<path d="M6.5,4.1L13.6,0.4L18.7,2L11.6,6.2Z" fill="#dfe8fb" stroke="#2a5ad8" stroke-width="0.6"/><path d="M6.5,4.1L11.6,6.2V16.7L6.5,15Z" fill="#d4e0fa"/>
<path d="M11.6,6.2L18.7,2V10.8L11.6,14Z" fill="#3a6ad4"/>
<path d="M13.6,12.5L19.5,9.6L23.7,10.4L17,13.7Z" fill="#e4ecfc" stroke="#2a5ad8" stroke-width="0.5"/><path d="M13.6,12.5L17,13.7V18.3L12.8,17.1Z" fill="#6a8ee4"/><path d="M17,13.7L23.7,10.4V15L17,18.3Z" fill="#3a62d0"/><path d="M1.1,16.7L3.2,15L6.1,19.2L11.55,12.1L13.2,13.3L6.5,22.9L4.9,22.5Z" fill="#2eb048" stroke="#168a2c" stroke-width="0.7"/><path d="M2.8,16.6L6,21L12,13" fill="none" stroke="#8ee09a" stroke-width="0.7"/></g><g transform="translate(128.0,43.0)"><path d="M13.6,0.4L19.9,3.3L17.4,7.5L22.8,10.4L20.3,14.6L9,8.7Z" fill="#eeeeee" stroke="#2a2ae8" stroke-width="1"/>
<path d="M8.2,4.5L10.7,4.5L4.8,13.7L1.9,15Z" fill="#2a2a2a"/>
<path d="M4,8.4L5,6.9L24.9,16.9L23.6,19.9L3.2,10.4Z" fill="#e8c478" stroke="#7ae4e4" stroke-width="0.8"/><path d="M1.1,16.7L3.2,15L6.1,19.2L11.55,12.1L13.2,13.3L6.5,22.9L4.9,22.5Z" fill="#2eb048" stroke="#168a2c" stroke-width="0.7"/><path d="M2.8,16.6L6,21L12,13" fill="none" stroke="#8ee09a" stroke-width="0.7"/></g><g transform="translate(159.0,43.0)"><path d="M4.4,4.1L11.5,0.4L16.5,1.6V16L9.8,17.5L4.4,15.8Z" fill="url(#gBd)" stroke="#2a5ad8" stroke-width="0.8"/>
<path d="M4.4,4.1L11.5,0.4L16.5,1.6L9.8,6.2Z" fill="#dfe8fb" stroke="#2a5ad8" stroke-width="0.6"/><path d="M4.4,4.1L9.8,6.2V17.5L4.4,15.8Z" fill="#d4e0fa"/>
<path d="M10.2,6.2L17.8,2L24.9,3.3V14.6L17.3,18.8L10.2,17.1Z" fill="#ffb84a" stroke="#f09030" stroke-width="0.7"/>
<path d="M10.2,6.2L17.8,2L24.9,3.3L17.3,7.9Z" fill="#ffd860"/><path d="M10.2,6.2L17.3,7.9V18.8L10.2,17.1Z" fill="url(#gY)"/><path d="M10.2,6.2L17.3,7.9V18.8L10.2,17.1Z" fill="#ffd030" fill-opacity="0.6"/><path d="M1.1,16.7L3.2,15L6.1,19.2L11.55,12.1L13.2,13.3L6.5,22.9L4.9,22.5Z" fill="#2eb048" stroke="#168a2c" stroke-width="0.7"/><path d="M2.8,16.6L6,21L12,13" fill="none" stroke="#8ee09a" stroke-width="0.7"/></g><rect x="190" y="43" width="1" height="25" fill="#c8c8c8"/><g transform="translate(196.0,42.5)"><path d="M1.6,5.6L8,2.2L14.6,5V11.6L8.4,14.6L1.6,12Z" fill="url(#gY)" stroke="#f0a020" stroke-width="0.9"/>
<path d="M1.6,5.6L8.4,8L14.6,5M8.4,8V14.6" fill="none" stroke="#f0a020" stroke-width="0.8"/>
<path d="M13.4,13.6L20.6,6.2L22.8,8.2L15.6,15.6L12.8,16.4Z" fill="#f6d040" stroke="#8a6a20" stroke-width="0.6"/>
<path d="M20.6,6.2L21.8,5L24,7L22.8,8.2Z" fill="#e04040"/><path d="M12.8,16.4L13.4,13.6L15.6,15.6Z" fill="#333"/>
<rect x="1.6" y="15.2" width="14.6" height="7" fill="#fff" stroke="#5a3ac0" stroke-width="1.2"/>
<text x="8.9" y="21" font-family="Liberation Sans, sans-serif" font-size="5.6" font-weight="bold" text-anchor="middle" fill="#222" letter-spacing="0.5">ABC</text>
<path d="M19.2,14.8L24.6,19.6L19.2,24.4Z" fill="#d040c0"/></g><path d="M227.9,60h5.2l-2.6,3.1z" fill="#111"/><rect x="243" y="43" width="2" height="2" fill="#cfcfcf"/><rect x="242" y="42" width="2" height="2" fill="#8e8e8e"/><rect x="243" y="47" width="2" height="2" fill="#cfcfcf"/><rect x="242" y="46" width="2" height="2" fill="#8e8e8e"/><rect x="243" y="51" width="2" height="2" fill="#cfcfcf"/><rect x="242" y="50" width="2" height="2" fill="#8e8e8e"/><rect x="243" y="55" width="2" height="2" fill="#cfcfcf"/><rect x="242" y="54" width="2" height="2" fill="#8e8e8e"/><rect x="243" y="59" width="2" height="2" fill="#cfcfcf"/><rect x="242" y="58" width="2" height="2" fill="#8e8e8e"/><rect x="243" y="63" width="2" height="2" fill="#cfcfcf"/><rect x="242" y="62" width="2" height="2" fill="#8e8e8e"/><rect x="243" y="67" width="2" height="2" fill="#cfcfcf"/><rect x="242" y="66" width="2" height="2" fill="#8e8e8e"/><g transform="translate(250.0,43.0)"><rect x="1" y="10.4" width="21.8" height="9" fill="#ececec"/>
<path d="M17.8,5.4L20.3,10.4L14,19.4L12.7,15Z" fill="url(#gGrd)" stroke="#2a2a2a" stroke-width="0.9"/>
<path d="M6.9,15L12.3,5.4H17.8L12.7,15Z" fill="#f6f6f6" stroke="#2a2a2a" stroke-width="0.9"/>
<path d="M1,10.4H8.6M1,19.4H4.4L12.3,5.4M20.3,10.4H22.8M14,19.4H22.8M6.9,15H12.7" fill="none" stroke="#2a2a2a" stroke-width="1"/></g><g transform="translate(280.5,43.6)"><path d="M1.5,9L6.5,13.1L12.4,5.6H17.4L21.2,11.5L24,9.8L23.2,18.2Q16,23.6 8.2,22.8Q3,21.6 0.7,19Z" fill="#f0f0f0" stroke="#2a2a2a" stroke-width="0.9"/>
<path d="M17.4,5.6L21.2,11.5L15.6,19L13,14.6Z" fill="url(#gGrd)" stroke="#2a2a2a" stroke-width="0.9"/>
<path d="M6.5,13.1L12.4,5.6H17.4L13,14.6L9,14.4Z" fill="#fafafa" stroke="#2a2a2a" stroke-width="0.9"/>
<path d="M6.5,13.1L9,14.4L13,14.6L15.6,19L8.6,22.6L4.6,17.6Z" fill="#f4f4f4" stroke="#2a2a2a" stroke-width="0.8"/>
<path d="M0.7,19Q9,24.6 23.2,18.2" fill="none" stroke="#2a2a2a" stroke-width="0.9"/></g><g transform="translate(312.0,43.0)"><path d="M0.9,2.9H7.8M3,7H6.8M3,16.9H6.8M0.9,21H7.8" stroke="#1a1a1a" stroke-width="1.6"/>
<rect x="3" y="10" width="3.8" height="3.8" fill="#d83030"/>
<path d="M7.6,11.2L12.6,10.6Q13.6,9 15,9.6Q18,9.4 20.2,10.6V18H14.6Q12.6,17.6 12.4,15.4Q12.4,14 13.4,13.4L7.8,13.4Q7,12.2 7.6,11.2Z" fill="#ecd4ac" stroke="#b09a7a" stroke-width="0.6"/>
<rect x="20.2" y="12" width="3.8" height="6.6" rx="0.8" fill="#5a6ae0" stroke="#3a4ac0" stroke-width="0.6"/></g><path d="M342.9,60h5.2l-2.6,3.1z" fill="#111"/><rect x="358" y="43" width="2" height="2" fill="#cfcfcf"/><rect x="357" y="42" width="2" height="2" fill="#8e8e8e"/><rect x="358" y="47" width="2" height="2" fill="#cfcfcf"/><rect x="357" y="46" width="2" height="2" fill="#8e8e8e"/><rect x="358" y="51" width="2" height="2" fill="#cfcfcf"/><rect x="357" y="50" width="2" height="2" fill="#8e8e8e"/><rect x="358" y="55" width="2" height="2" fill="#cfcfcf"/><rect x="357" y="54" width="2" height="2" fill="#8e8e8e"/><rect x="358" y="59" width="2" height="2" fill="#cfcfcf"/><rect x="357" y="58" width="2" height="2" fill="#8e8e8e"/><rect x="358" y="63" width="2" height="2" fill="#cfcfcf"/><rect x="357" y="62" width="2" height="2" fill="#8e8e8e"/><rect x="358" y="67" width="2" height="2" fill="#cfcfcf"/><rect x="357" y="66" width="2" height="2" fill="#8e8e8e"/><g transform="translate(365.5,43.0)"><ellipse cx="12" cy="5.00" rx="7" ry="2" fill="#d4daf6" stroke="#3a44b8" stroke-width="0.9"/><ellipse cx="12" cy="6.90" rx="7" ry="2" fill="#d4daf6" stroke="#3a44b8" stroke-width="0.9"/><ellipse cx="12" cy="8.80" rx="7" ry="2" fill="#d4daf6" stroke="#3a44b8" stroke-width="0.9"/><ellipse cx="12" cy="10.70" rx="7" ry="2" fill="#d4daf6" stroke="#3a44b8" stroke-width="0.9"/><ellipse cx="12" cy="12.60" rx="7" ry="2" fill="#d4daf6" stroke="#3a44b8" stroke-width="0.9"/><ellipse cx="12" cy="14.50" rx="7" ry="2" fill="#d4daf6" stroke="#3a44b8" stroke-width="0.9"/><ellipse cx="12" cy="16.40" rx="7" ry="2" fill="#d4daf6" stroke="#3a44b8" stroke-width="0.9"/><ellipse cx="12" cy="18.30" rx="7" ry="2" fill="#d4daf6" stroke="#3a44b8" stroke-width="0.9"/><ellipse cx="12" cy="20.20" rx="7" ry="2" fill="#d4daf6" stroke="#3a44b8" stroke-width="0.9"/></g><g transform="translate(396.5,43.0)"><g transform="rotate(-30 12 12)"><ellipse cx="12" cy="5.60" rx="4.6" ry="1.7" fill="#d4daf8" stroke="#4a5ad0" stroke-width="0.9"/><ellipse cx="12" cy="7.35" rx="4.6" ry="1.7" fill="#d4daf8" stroke="#4a5ad0" stroke-width="0.9"/><ellipse cx="12" cy="9.10" rx="4.6" ry="1.7" fill="#d4daf8" stroke="#4a5ad0" stroke-width="0.9"/><ellipse cx="12" cy="10.85" rx="4.6" ry="1.7" fill="#d4daf8" stroke="#4a5ad0" stroke-width="0.9"/><ellipse cx="12" cy="12.60" rx="4.6" ry="1.7" fill="#d4daf8" stroke="#4a5ad0" stroke-width="0.9"/><ellipse cx="12" cy="14.35" rx="4.6" ry="1.7" fill="#d4daf8" stroke="#4a5ad0" stroke-width="0.9"/><ellipse cx="12" cy="16.10" rx="4.6" ry="1.7" fill="#d4daf8" stroke="#4a5ad0" stroke-width="0.9"/><ellipse cx="12" cy="17.85" rx="4.6" ry="1.7" fill="#d4daf8" stroke="#4a5ad0" stroke-width="0.9"/><path d="M12,5V3A2.6,2.6 0 1 0 9.4,0.6M12,19.6V22A2.6,2.6 0 1 0 14.6,24" fill="none" stroke="#4a5ad0" stroke-width="1.2"/></g></g><g transform="translate(427.5,43.0)"><ellipse cx="14.6" cy="12" rx="7" ry="10.4" fill="url(#gGh)" stroke="#d09000" stroke-width="0.8"/>
<path d="M13,1.8Q17,5 17,12Q17,19 13,22.4M15.4,2.2Q19,6 19,12Q19,18 15.4,22" fill="none" stroke="#5a5a4a" stroke-width="0.7"/>
<ellipse cx="9.6" cy="12" rx="7.2" ry="10.4" fill="#fbe070" stroke="#e0a000" stroke-width="0.8"/>
<ellipse cx="10" cy="12" rx="2.6" ry="4.6" fill="#e8b828" stroke="#8a7a4a" stroke-width="0.7"/>
<path d="M9.4,8.4V15.6M10.8,8.2V15.8" stroke="#6a6a6a" stroke-width="0.6"/></g><rect x="457" y="43" width="1" height="25" fill="#c8c8c8"/><g transform="translate(464.0,43.0)"><ellipse cx="18.9" cy="9.9" rx="3" ry="6.4" transform="rotate(-35 18.9 9.9)" fill="none" stroke="#5a6ad8" stroke-width="1.3"/><ellipse cx="15.6" cy="12.3" rx="3" ry="6.4" transform="rotate(-35 15.6 12.3)" fill="none" stroke="#5a6ad8" stroke-width="1.3"/><ellipse cx="11.7" cy="15.2" rx="3" ry="6.4" transform="rotate(-35 11.7 15.2)" fill="none" stroke="#5a6ad8" stroke-width="1.3"/><ellipse cx="7.9" cy="17.6" rx="3" ry="6.4" transform="rotate(-35 7.9 17.6)" fill="none" stroke="#6a6a7a" stroke-width="1.3"/><path d="M1.2,17.8Q4,16 7,15" fill="none" stroke="#5a6ad8" stroke-width="1.3"/>
<path d="M1.2,1.3L12.7,16.2M13.2,1.3L2.2,13.3" stroke="#3a3a3a" stroke-width="1.6"/></g><path d="M494.9,60h5.2l-2.6,3.1z" fill="#111"/><rect x="591" y="43" width="2" height="2" fill="#cfcfcf"/><rect x="590" y="42" width="2" height="2" fill="#8e8e8e"/><rect x="591" y="47" width="2" height="2" fill="#cfcfcf"/><rect x="590" y="46" width="2" height="2" fill="#8e8e8e"/><rect x="591" y="51" width="2" height="2" fill="#cfcfcf"/><rect x="590" y="50" width="2" height="2" fill="#8e8e8e"/><rect x="591" y="55" width="2" height="2" fill="#cfcfcf"/><rect x="590" y="54" width="2" height="2" fill="#8e8e8e"/><rect x="591" y="59" width="2" height="2" fill="#cfcfcf"/><rect x="590" y="58" width="2" height="2" fill="#8e8e8e"/><rect x="591" y="63" width="2" height="2" fill="#cfcfcf"/><rect x="590" y="62" width="2" height="2" fill="#8e8e8e"/><rect x="591" y="67" width="2" height="2" fill="#cfcfcf"/><rect x="590" y="66" width="2" height="2" fill="#8e8e8e"/><g transform="translate(597.3,43.0)"><path d="M12,3.6L22.2,19.8H1.8Z" fill="none" stroke="#2a2a2a" stroke-width="1.2"/></g><g transform="translate(628.0,43.0)"><rect x="1" y="2" width="21" height="17.4" fill="#f4f4f4" stroke="#8a8a9a" stroke-width="0.8"/>
<rect x="1" y="2" width="21" height="3.2" fill="#8a62e0"/>
<path d="M1,8.6H22M1,12H22M1,15.6H22M4.6,5V19.4M8.2,5V19.4M11.8,5V19.4M15.4,5V19.4M19,5V19.4" stroke="#9a9aa6" stroke-width="0.6"/>
<path d="M16.4,14.4L21.6,22.4H11.2Z" fill="#fff" stroke="#e03a3a" stroke-width="1.3"/></g><g transform="translate(658.5,43.0)"><path d="M1.6,4Q1.6,2.6 3,2.6L9,2L10.6,3.6L18,3V8L22.8,6.6Q20,14 19.6,19.4L2,20.4Z" fill="url(#gF)" stroke="#d8bc6a" stroke-width="0.7"/>
<path d="M2,20.4Q3,12 5.4,8L22.8,6.6Q20,14 19.6,19.4Z" fill="#f2dc98" stroke="#d8bc6a" stroke-width="0.6"/><path d="M11.6,8.8H19.6M15.6,4.800000000000001V12.8" stroke="#1a1a1a" stroke-width="1"/><circle cx="15.6" cy="8.8" r="1.7" fill="#f02a2a"/><path d="M5,16.2H13M9,12.2V20.2" stroke="#1a1a1a" stroke-width="1"/><circle cx="9" cy="16.2" r="1.7" fill="#f02a2a"/><path d="M15,18.2H23M19,14.2V22.2" stroke="#1a1a1a" stroke-width="1"/><circle cx="19" cy="18.2" r="1.7" fill="#f02a2a"/></g><g transform="translate(689.5,43.0)"><path d="M1.6,4Q1.6,2.6 3,2.6L9,2L10.6,3.6L18,3V8L22.8,6.6Q20,14 19.6,19.4L2,20.4Z" fill="url(#gF)" stroke="#d8bc6a" stroke-width="0.7"/>
<path d="M2,20.4Q3,12 5.4,8L22.8,6.6Q20,14 19.6,19.4Z" fill="#f2dc98" stroke="#d8bc6a" stroke-width="0.6"/><g fill="none" stroke="#2a2a2a" stroke-width="1"><circle cx="15.2" cy="8" r="3.6"/><circle cx="8.6" cy="16.2" r="3.6"/><circle cx="18.8" cy="19" r="3.6" fill="#fff"/></g></g><g transform="translate(721.0,43.0)"><rect x="2.6" y="2.6" width="20.4" height="20.4" fill="#c8c8c8"/>
<rect x="1.6" y="1.6" width="20" height="20" fill="#f4f4f4" stroke="#2a2a2a" stroke-width="1.2"/>
<path d="M3.6,13.6H16M3.6,16H13M3.6,18.4H14.6" stroke="#2a2a2a" stroke-width="1.1"/></g><g transform="translate(752.0,43.0)"><path d="M13.6,6.4L19.6,1.2Q21.4,1 21.4,2.8L16,8.6Z" fill="#7a8ae8" stroke="#4a5ac8" stroke-width="0.6"/>
<path d="M7.6,8.6L12,5.4L16.6,9.6Q16,13.6 12.6,14.6Q10,11.6 7.6,8.6Z" fill="#ecd48a" stroke="#a08a4a" stroke-width="0.7"/>
<path d="M1.6,18.6H23M1.6,14.6V22.6M23.4,14.6V22.6" stroke="#c83030" stroke-width="1.1" fill="none"/>
<path d="M1.8,18.6L5.6,16.6V20.6ZM23.2,18.6L19.4,16.6V20.6Z" fill="#c83030"/></g><rect x="782" y="43" width="1" height="25" fill="#c8c8c8"/><g transform="translate(789.0,43.0)"><g transform="translate(0.8,-0.2) scale(0.94) rotate(18 12 6)"><rect x="3" y="1" width="7" height="8" rx="2" fill="#55555f"/><rect x="12.6" y="1.4" width="7.4" height="8.6" rx="2" fill="#55555f"/><rect x="9" y="2.4" width="5" height="3.6" fill="#6a6a74"/>
<ellipse cx="6" cy="8.6" rx="3.6" ry="2.6" fill="#a8b8ec" stroke="#55555f" stroke-width="0.8"/><ellipse cx="16" cy="9.6" rx="4.2" ry="3" fill="#a8b8ec" stroke="#55555f" stroke-width="0.8"/></g>
<text x="0.2" y="22.8" font-family="Liberation Sans, sans-serif" font-size="12.5" fill="#1a1a1a" stroke="#1a1a1a" stroke-width="0.25" textLength="11.2" lengthAdjust="spacingAndGlyphs">10</text>
<text x="11.6" y="22.8" font-family="Liberation Sans, sans-serif" font-size="12.5" fill="#8a1a1a" stroke="#8a1a1a" stroke-width="0.25" textLength="12.4" lengthAdjust="spacingAndGlyphs">H7</text></g><path d="M819.9,60h5.2l-2.6,3.1z" fill="#111"/><rect x="835" y="43" width="2" height="2" fill="#cfcfcf"/><rect x="834" y="42" width="2" height="2" fill="#8e8e8e"/><rect x="835" y="47" width="2" height="2" fill="#cfcfcf"/><rect x="834" y="46" width="2" height="2" fill="#8e8e8e"/><rect x="835" y="51" width="2" height="2" fill="#cfcfcf"/><rect x="834" y="50" width="2" height="2" fill="#8e8e8e"/><rect x="835" y="55" width="2" height="2" fill="#cfcfcf"/><rect x="834" y="54" width="2" height="2" fill="#8e8e8e"/><rect x="835" y="59" width="2" height="2" fill="#cfcfcf"/><rect x="834" y="58" width="2" height="2" fill="#8e8e8e"/><rect x="835" y="63" width="2" height="2" fill="#cfcfcf"/><rect x="834" y="62" width="2" height="2" fill="#8e8e8e"/><rect x="835" y="67" width="2" height="2" fill="#cfcfcf"/><rect x="834" y="66" width="2" height="2" fill="#8e8e8e"/><g transform="translate(842.0,43.0)"><path d="M3,3.24L9.0,0.6L15,3.24V10.68L9.0,13.32L3,10.68Z" fill="url(#gG)" stroke="#e8a800" stroke-width="0.8"/><path d="M3,3.24L9.0,5.88L15,3.24L9.0,0.6Z" fill="#fff8c8" stroke="#e8a800" stroke-width="0.6"/><path d="M3,3.24L9.0,5.88V13.32L3,10.68Z" fill="#fffbe0" fill-opacity="0.7"/><path d="M11.4,11.02L16.9,8.6L22.4,11.02V17.84L16.9,20.259999999999998L11.4,17.84Z" fill="url(#gG)" stroke="#e8a800" stroke-width="0.8"/><path d="M11.4,11.02L16.9,13.44L22.4,11.02L16.9,8.6Z" fill="#fff8c8" stroke="#e8a800" stroke-width="0.6"/><path d="M11.4,11.02L16.9,13.44V20.259999999999998L11.4,17.84Z" fill="#fffbe0" fill-opacity="0.7"/><path d="M4,13V10.8Q4,7.8 6.6,7.8Q9.2,7.8 9.2,10.8V13" fill="none" stroke="#b0a050" stroke-width="1.4"/>
<path d="M1.4,13.2L8,12.4L11.6,13.8V20.8L5.6,22.4L1.4,20.6Z" fill="#eee070" stroke="#a89830" stroke-width="0.8"/><path d="M1.4,13.2L5.6,14.8L11.6,13.8M5.6,14.8V22.4" fill="none" stroke="#a89830" stroke-width="0.6"/></g><g transform="translate(873.0,43.0)"><path d="M3.6,3.24L9.6,0.6L15.6,3.24V10.68L9.6,13.32L3.6,10.68Z" fill="url(#gG)" stroke="#e8a800" stroke-width="0.8"/><path d="M3.6,3.24L9.6,5.88L15.6,3.24L9.6,0.6Z" fill="#fff8c8" stroke="#e8a800" stroke-width="0.6"/><path d="M3.6,3.24L9.6,5.88V13.32L3.6,10.68Z" fill="#fffbe0" fill-opacity="0.7"/><path d="M11.4,11.02L16.9,8.6L22.4,11.02V17.84L16.9,20.259999999999998L11.4,17.84Z" fill="url(#gG)" stroke="#e8a800" stroke-width="0.8"/><path d="M11.4,11.02L16.9,13.44L22.4,11.02L16.9,8.6Z" fill="#fff8c8" stroke="#e8a800" stroke-width="0.6"/><path d="M11.4,11.02L16.9,13.44V20.259999999999998L11.4,17.84Z" fill="#fffbe0" fill-opacity="0.7"/><g transform="translate(1.4,1)"><path d="M4,13V10.8Q4,7.8 6.6,7.8Q9.2,7.8 9.2,10.8V13" fill="none" stroke="#b0a050" stroke-width="1.4"/>
<path d="M1.4,13.2L8,12.4L11.6,13.8V20.8L5.6,22.4L1.4,20.6Z" fill="#eee070" stroke="#a89830" stroke-width="0.8"/><path d="M1.4,13.2L5.6,14.8L11.6,13.8M5.6,14.8V22.4" fill="none" stroke="#a89830" stroke-width="0.6"/></g></g><path d="M903.4,60h5.2l-2.6,3.1z" fill="#111"/><rect x="919" y="43" width="2" height="2" fill="#cfcfcf"/><rect x="918" y="42" width="2" height="2" fill="#8e8e8e"/><rect x="919" y="47" width="2" height="2" fill="#cfcfcf"/><rect x="918" y="46" width="2" height="2" fill="#8e8e8e"/><rect x="919" y="51" width="2" height="2" fill="#cfcfcf"/><rect x="918" y="50" width="2" height="2" fill="#8e8e8e"/><rect x="919" y="55" width="2" height="2" fill="#cfcfcf"/><rect x="918" y="54" width="2" height="2" fill="#8e8e8e"/><rect x="919" y="59" width="2" height="2" fill="#cfcfcf"/><rect x="918" y="58" width="2" height="2" fill="#8e8e8e"/><rect x="919" y="63" width="2" height="2" fill="#cfcfcf"/><rect x="918" y="62" width="2" height="2" fill="#8e8e8e"/><rect x="919" y="67" width="2" height="2" fill="#cfcfcf"/><rect x="918" y="66" width="2" height="2" fill="#8e8e8e"/><g transform="translate(926.0,43.0)"><path d="M3.3,19.8L19.8,3.6" stroke="#2a2a2a" stroke-width="1.2"/><circle cx="3.3" cy="19.8" r="1.9" fill="#e83030"/><circle cx="19.8" cy="3.6" r="1.9" fill="#e83030"/></g><g transform="translate(956.0,43.0)"><path d="M3.3,3.2Q11,3 16.5,7Q20.4,11 21.5,19.5" fill="none" stroke="#2a2a2a" stroke-width="1.2"/><circle cx="3.3" cy="3.2" r="1.9" fill="#e83030"/><circle cx="16.5" cy="7" r="1.9" fill="#e83030"/><circle cx="21.5" cy="19.5" r="1.9" fill="#e83030"/></g><g transform="translate(988.0,43.0)"><path d="M3.4,11.5L8,2.4L8,9.9L15.8,14L22,9.9M15.8,14L15.8,19.8L8,9.9" fill="none" stroke="#8a8a8a" stroke-width="0.9"/>
<path d="M3.4,11.5Q6,8 8,9.9Q12,14 15.8,14Q19.6,13 22,9.9" fill="none" stroke="#3a3a3a" stroke-width="1"/><circle cx="8" cy="2.4" r="2" fill="#8a8a8a"/><circle cx="3.4" cy="11.5" r="2" fill="#8a8a8a"/><circle cx="22" cy="9.9" r="2" fill="#8a8a8a"/><circle cx="15.8" cy="19.8" r="2" fill="#8a8a8a"/><circle cx="8" cy="9.9" r="2" fill="#e83030"/><circle cx="15.8" cy="14" r="2" fill="#e83030"/></g><g transform="translate(1019.0,43.0)"><path d="M2.4,9.55L7,4.5H15.6V8.7Q21.4,10.4 21.7,14.6Q21.6,19.6 17.1,21.3H2.4Z" fill="none" stroke="#222" stroke-width="1.2"/>
<path d="M5.4,10.8L9.1,7.5H12.5V10.8Q18.6,12 18.9,15Q18.6,17.6 15.8,18.3H5.4Z" fill="none" stroke="#d83030" stroke-width="1.1"/></g><g transform="translate(1050.0,43.0)"><path d="M1.15,9.55Q7,5 12,4.5Q18.6,7.6 23.7,13.3Q18,15.6 13.7,20Q8.6,13.4 1.15,9.55Z" fill="url(#gBv)" stroke="#8aa8e0" stroke-width="0.6"/>
<path d="M1.15,9.55Q8.6,13.4 13.7,20" fill="none" stroke="#2a3af0" stroke-width="1.8"/>
<path d="M9.5,5.4Q16.6,8.6 21.2,15.4" fill="none" stroke="#f0702a" stroke-width="1.5"/>
<path d="M10.35,14.6L14.2,12.1" stroke="#d82a2a" stroke-width="1.1"/><path d="M12.8,10.6L16,11L14.4,13.8Z" fill="#d82a2a"/></g><g transform="translate(1081.0,43.0)"><path d="M6.1,1.6Q1.5,1.4 1.5,4.95Q1.7,8.4 6.1,8.3L9.5,7.7M6.1,15.4Q1.5,15.2 1.5,18.8Q1.7,22.3 6.1,22.1L9.3,21.3M17.6,4.5Q19.8,2.6 22.9,4.95M17.6,17.1Q20,15.6 22.9,18.6" fill="none" stroke="#1a1a1a" stroke-width="1.1"/>
<path d="M9.5,7.9V21.3M17.7,4.5V17.1" stroke="#2a2af0" stroke-width="1" stroke-dasharray="1 1.1"/>
<path d="M9.5,21.3L17.7,17.1" stroke="#e82a2a" stroke-width="1.3"/>
<path d="M12.4,8.7H14.5V12.1H16.2L13.4,15.8L10.7,12.1H12.4Z" fill="url(#gOv)" stroke="#e8803a" stroke-width="0.6"/></g><g transform="translate(1112.5,43.0)"><path d="M5.6,1L19.6,5" stroke="#2a3ae0" stroke-width="1.5"/>
<path d="M0.6,14L11,9Q19,11.6 23,17L12.6,23.6Q7,17.6 0.6,14Z" fill="url(#gB)" stroke="#7a9ae0" stroke-width="0.8"/>
<path d="M8.6,12.6Q14,14 16.6,19.4" fill="none" stroke="#f07a30" stroke-width="1.7"/>
<path d="M13.6,3.4V9.6" stroke="#d02a2a" stroke-width="1.1"/><path d="M11.6,8.4H15.6L13.6,11.6Z" fill="#d02a2a"/></g><path d="M1144,53L1147,51.5V55Z" fill="#7a9ae0"/><rect x="462.5" y="77.5" width="22" height="21" fill="#c6dad5" stroke="#adc7c1" stroke-width="1"/><rect x="485.5" y="77.5" width="22" height="21" fill="#c6dad5" stroke="#adc7c1" stroke-width="1"/><rect x="508.5" y="77.5" width="22" height="21" fill="#c6dad5" stroke="#adc7c1" stroke-width="1"/><rect x="554.5" y="77.5" width="22" height="21" fill="#c6dad5" stroke="#adc7c1" stroke-width="1"/><rect x="600.5" y="77.5" width="22" height="21" fill="#c6dad5" stroke="#adc7c1" stroke-width="1"/><rect x="646.5" y="77.5" width="23" height="21" fill="#c6dad5" stroke="#adc7c1" stroke-width="1"/><rect x="669.5" y="77.5" width="23" height="21" fill="#c6dad5" stroke="#adc7c1" stroke-width="1"/><g transform="translate(232.5,75.5)"><path d="M4.7,8.6L8.9,8.2L13.2,9.4V13.6L13.2,17.9L8.9,16.6L4.7,16.9Z M8.9,8.2V16.6M4.7,12.7L8.9,12.4L13.2,13.6" fill="none" stroke="#b0b0b0" stroke-width="0.9"/>
<path d="M4.7,8.55H13.1M8.9,4V13.6" stroke="#a0a0a0" stroke-width="0.9"/><circle cx="8.9" cy="8.55" r="2.2" fill="none" stroke="#a0a0a0" stroke-width="0.9"/>
<circle cx="16" cy="6" r="2.2" fill="none" stroke="#b0b0b0" stroke-width="0.9"/><circle cx="18.1" cy="9.8" r="2.4" fill="none" stroke="#b0b0b0" stroke-width="0.9"/><circle cx="17.1" cy="12.3" r="2.6" fill="#f4f4f4" stroke="#b0b0b0" stroke-width="0.9"/></g><rect x="259" y="77" width="1" height="22" fill="#c8c8c8"/><g transform="translate(261.0,76.0)"><path d="M5.5,9L9,6.4V8Q11.6,8.4 12.2,6Q14,8 12.6,10Q11,11.4 9,10.4V11.6Z" fill="#c8c8c8" stroke="#c0c0c0" stroke-width="0.5"/>
<path d="M12.6,12.7H20.6L17.6,16V19.4L15.5,18.6V16Z" fill="#e4e4e4" stroke="#d4d4d4" stroke-width="0.7"/></g><g transform="translate(282.0,75.8)"><rect x="4.75" y="4.8" width="15" height="15" fill="#fff" stroke="#d83a4a" stroke-width="1.2"/>
<circle cx="9.4" cy="9.4" r="2.5" fill="none" stroke="#e03a3a" stroke-width="0.8"/><path d="M6.2,9.4H12.8M9.4,6.2V12.7" stroke="#1a1a1a" stroke-width="1"/>
<path d="M12.1,12.3H18L16.1,14.8V17.8L14.2,17.2V14.8Z" fill="#f0b020" stroke="#e0a010" stroke-width="0.5"/></g><path d="M308.9,86h5.2l-2.6,3.1z" fill="#111"/><g transform="translate(315.0,76.0)"><path d="M5.6,9.6L4.6,5.6L8,7" fill="none" stroke="#b4b4b4" stroke-width="1"/><path d="M5,6.4Q9,2.6 12,6Q13,8 11.6,10" fill="none" stroke="#b4b4b4" stroke-width="1.1"/>
<path d="M8.6,16.6H20M14.4,11V22" stroke="#a8a8a8" stroke-width="1"/><circle cx="14.4" cy="16.6" r="3.6" fill="none" stroke="#a8a8a8" stroke-width="0.9"/></g><g transform="translate(338.0,76.0)"><path d="M5,7Q7,3.6 11,5.6Q14,4 15,7.6Q12,10 9,8.6Q6,9.6 5,7Z" fill="#d8d8d8" stroke="#b4b4b4" stroke-width="0.8"/><path d="M6,5.4L8,8M9,4.6L11,8.4M12,5L13.4,8" stroke="#b4b4b4" stroke-width="0.7"/>
<path d="M13,10.6L17,9.6L19.6,10.6V15L19.6,20.6L16,21.6L13.4,20.6V15.4Z" fill="#f0f0f0" stroke="#b4b4b4" stroke-width="0.9"/><path d="M13,10.6L16,11.6L19.6,10.6M16,11.6V21.6M13.4,15.4L16,16.4L19.6,15" fill="none" stroke="#b4b4b4" stroke-width="0.8"/></g><rect x="365" y="77" width="1" height="22" fill="#c8c8c8"/><g transform="translate(368.0,76.0)"><rect x="4.9" y="6.4" width="14.2" height="11.3" fill="none" stroke="#1a1a1a" stroke-width="0.9" stroke-dasharray="2.2 1.5"/><circle cx="4.9" cy="6.4" r="1.4" fill="#e83030"/><circle cx="19.1" cy="17.7" r="1.4" fill="#e83030"/></g><path d="M395.9,86h5.2l-2.6,3.1z" fill="#111"/><rect x="406" y="77" width="1" height="22" fill="#c8c8c8"/><g transform="translate(409.0,76.0)"><path d="M4.2,13.6L8,7Q13,5 18,7.6L20,12V15.6L14,17.6L8.6,16.6Z" fill="#f4f4f6" stroke="#5a5a6a" stroke-width="0.8"/>
<path d="M14,13.6Q17,11 20,12V15.6L14,17.6Z" fill="#b8b8c0" stroke="#5a5a6a" stroke-width="0.7"/><path d="M4.2,13.6Q9,11.6 14,13.6V17.6L8.6,16.6Z" fill="#dcdce4" stroke="#5a5a6a" stroke-width="0.7"/>
<path d="M8.6,9.6L15.6,11" stroke="#e02a2a" stroke-width="1.4"/></g><g transform="translate(432.0,76.0)"><path d="M4,7.6L10,4.6L20,6V16.6L13,19.6L4,17Z" fill="#8ab4f0" stroke="#6a9ae8" stroke-width="0.6"/>
<path d="M4,7.6L10,4.6L20,6L13.4,9Z" fill="#d8ecfc"/><path d="M4,7.6L13.4,9V19.6L4,17Z" fill="url(#gWc)"/>
<path d="M10,4.6V14.6L4,17M10,14.6L20,16.6" fill="none" stroke="#e85a5a" stroke-width="0.7"/><path d="M10,4.4V2.6" stroke="#e85a5a" stroke-width="0.7"/></g><rect x="458" y="77" width="1" height="22" fill="#c8c8c8"/><g transform="translate(461.0,76.0)"><path d="M5.2,6.9L7.8,9.1L5.2,11.4Z" fill="#28a83a"/><path d="M5.2,14.6L7.8,16.8L5.2,19Z" fill="#e02a2a"/>
<path d="M9.8,13.5L14.3,9L18.8,13.5L14.3,18Z" fill="none" stroke="#1a1a1a" stroke-width="0.9"/>
<circle cx="14.3" cy="13.5" r="1.9" fill="#ffe020" stroke="#e0a000" stroke-width="0.5"/>
<g fill="#fff" stroke="#1a1a1a" stroke-width="0.9"><circle cx="14.3" cy="8.9" r="1.5"/><circle cx="14.3" cy="18.1" r="1.5"/><circle cx="9.7" cy="13.5" r="1.5"/><circle cx="18.9" cy="13.5" r="1.5"/></g></g><g transform="translate(484.0,76.0)"><path d="M7.5,18.5L17.3,8.6" stroke="#1a1a1a" stroke-width="1.2"/><circle cx="17.3" cy="8.6" r="1.7" fill="#e83030"/></g><g transform="translate(507.0,76.0)"><path d="M6,19.7L18.8,7" stroke="#1a1a1a" stroke-width="1.2"/><circle cx="12.4" cy="13.4" r="1.7" fill="#e83030"/></g><g transform="translate(529.0,76.0)"><path d="M6.4,5.6Q11.6,5.6 12,12Q12.6,18.6 19.2,18.4" fill="none" stroke="#1a1a1a" stroke-width="1.2"/><circle cx="12" cy="12" r="1.7" fill="#e83030"/></g><g transform="translate(553.0,76.0)"><path d="M4.4,12.6L9,5.4L14.4,17.4L17.6,10.4" fill="none" stroke="#9a3ad0" stroke-width="1.1"/>
<path d="M4.4,12.6Q8,9 11,12.4Q14,15.6 17.6,10.4" fill="none" stroke="#1a1a1a" stroke-width="1.1"/><circle cx="4.4" cy="12.6" r="1.5" fill="#e83030"/><circle cx="9" cy="5.4" r="1.5" fill="#e83030"/><circle cx="14.4" cy="17.4" r="1.5" fill="#e83030"/><circle cx="17.6" cy="10.4" r="1.5" fill="#e83030"/></g><g transform="translate(576.0,76.0)"><path d="M4.8,14.7Q12,5.6 19.2,14.7M12,5.3V18.8" fill="none" stroke="#1a1a1a" stroke-width="1.1"/><circle cx="12" cy="10.4" r="1.5" fill="#e83030"/></g><g transform="translate(599.5,76.0)"><circle cx="12.7" cy="12.2" r="7.3" fill="none" stroke="#1a1a1a" stroke-width="1.2"/><path d="M9.7,12.2H15.7M12.7,9.2V15.2" stroke="#e83030" stroke-width="0.7"/><circle cx="12.7" cy="12.2" r="1.6" fill="#e83030"/></g><g transform="translate(622.0,76.0)"><circle cx="12.6" cy="11.4" r="6.8" fill="none" stroke="#a86a6a" stroke-width="1"/><circle cx="12.6" cy="4.6" r="1.5" fill="#e83030"/><circle cx="12.6" cy="18.2" r="1.5" fill="#e83030"/><circle cx="5.8" cy="11.4" r="1.5" fill="#e83030"/><circle cx="19.4" cy="11.4" r="1.5" fill="#e83030"/></g><g transform="translate(646.0,76.0)"><path d="M6,12.2H19.2M12.6,5.6V18.8" stroke="#1a1a1a" stroke-width="1.3"/><circle cx="12.6" cy="12.2" r="1.6" fill="#e83030"/></g><g transform="translate(669.0,76.0)"><path d="M5.3,19.7L18.2,7" stroke="#1a1a1a" stroke-width="1.2"/><circle cx="8.3" cy="16.4" r="1.7" fill="#e83030"/></g><g transform="translate(691.0,76.0)"><path d="M4,7.4Q8,3.6 13.6,4.4L19.6,6.6Q14,8.6 13,19.6L10,18.6Q4.6,16 4,7.4Z" fill="url(#gB)" stroke="#6a9ae0" stroke-width="0.8"/>
<path d="M13.6,14L19,12.6L15,18.6Z" fill="#c4c4c4"/><circle cx="12.4" cy="8.4" r="1.5" fill="#e83030"/></g><rect x="717" y="77" width="1" height="22" fill="#c8c8c8"/><g transform="translate(720.0,76.0)"><path d="M7,5.3L17.2,10.4V19.2L7,14Z M10.4,7V15.8M13.8,8.7V17.5M7,8.2L17.2,13.3M7,11.1L17.2,16.2" fill="none" stroke="#1a1a1a" stroke-width="0.9"/><circle cx="13.8" cy="11.6" r="1.5" fill="#e83030"/></g><rect x="299" y="609" width="2" height="2" fill="#cfcfcf"/><rect x="298" y="608" width="2" height="2" fill="#8e8e8e"/><rect x="299" y="613" width="2" height="2" fill="#cfcfcf"/><rect x="298" y="612" width="2" height="2" fill="#8e8e8e"/><rect x="299" y="617" width="2" height="2" fill="#cfcfcf"/><rect x="298" y="616" width="2" height="2" fill="#8e8e8e"/><rect x="299" y="621" width="2" height="2" fill="#cfcfcf"/><rect x="298" y="620" width="2" height="2" fill="#8e8e8e"/><rect x="299" y="625" width="2" height="2" fill="#cfcfcf"/><rect x="298" y="624" width="2" height="2" fill="#8e8e8e"/><rect x="299" y="629" width="2" height="2" fill="#cfcfcf"/><rect x="298" y="628" width="2" height="2" fill="#8e8e8e"/><rect x="299" y="633" width="2" height="2" fill="#cfcfcf"/><rect x="298" y="632" width="2" height="2" fill="#8e8e8e"/><g transform="translate(305.6,609.6)"><path d="M1.6,0.6L18.6,4V22.6L1.6,18Z" fill="#eef6ee" stroke="#2a2a2a" stroke-width="1"/>
<path d="M4,4.6L10.6,6V11L4,9.6ZM4,12L8,13V18L4,17ZM10,14.6L15.6,15.6V20L10,19Z" fill="#dcecdc" stroke="#2a2a2a" stroke-width="0.9"/>
<path d="M18,0L18.8,5.4L24,4L19.8,7.2L23.6,11L18.4,9L16.6,14L16.2,8.6L11,9.6L15.4,6.6L12.6,2.2L16.8,5Z" fill="#fff26a" stroke="#e8d020" stroke-width="0.5"/>
<path d="M17.6,1V13M12.6,3L22.6,10.6M11.6,9.4L23.6,4.6" stroke="#5aa0e0" stroke-width="0.5"/></g><g transform="translate(336.7,610.0)"><rect x="0.4" y="0.4" width="23.6" height="23.2" fill="url(#gFi)" stroke="#c0c0c0" stroke-width="0.8"/>
<g transform="matrix(15.2,-2.6,4.7,11.5,2.5,4.9)"><rect x="0.000" y="0.000" width="0.2" height="0.25" fill="#9c9c9c"/><rect x="0.000" y="0.250" width="0.2" height="0.25" fill="#f6f6f6"/><rect x="0.000" y="0.500" width="0.2" height="0.25" fill="#9c9c9c"/><rect x="0.000" y="0.750" width="0.2" height="0.25" fill="#f6f6f6"/><rect x="0.200" y="0.000" width="0.2" height="0.25" fill="#f6f6f6"/><rect x="0.200" y="0.250" width="0.2" height="0.25" fill="#9c9c9c"/><rect x="0.200" y="0.500" width="0.2" height="0.25" fill="#f6f6f6"/><rect x="0.200" y="0.750" width="0.2" height="0.25" fill="#9c9c9c"/><rect x="0.400" y="0.000" width="0.2" height="0.25" fill="#9c9c9c"/><rect x="0.400" y="0.250" width="0.2" height="0.25" fill="#f6f6f6"/><rect x="0.400" y="0.500" width="0.2" height="0.25" fill="#9c9c9c"/><rect x="0.400" y="0.750" width="0.2" height="0.25" fill="#f6f6f6"/><rect x="0.600" y="0.000" width="0.2" height="0.25" fill="#f6f6f6"/><rect x="0.600" y="0.250" width="0.2" height="0.25" fill="#9c9c9c"/><rect x="0.600" y="0.500" width="0.2" height="0.25" fill="#f6f6f6"/><rect x="0.600" y="0.750" width="0.2" height="0.25" fill="#9c9c9c"/><rect x="0.800" y="0.000" width="0.2" height="0.25" fill="#9c9c9c"/><rect x="0.800" y="0.250" width="0.2" height="0.25" fill="#f6f6f6"/><rect x="0.800" y="0.500" width="0.2" height="0.25" fill="#9c9c9c"/><rect x="0.800" y="0.750" width="0.2" height="0.25" fill="#f6f6f6"/></g>
<path d="M2.5,4.9L9,21.6" stroke="#9a9a9a" stroke-width="1"/></g><g transform="translate(416.0,610.0)"><path d="M2.3,1.3V15Q2.3,20 6.8,20Q11.4,20 11.4,15V12Q11.4,7.6 16,7.6Q20.5,7.6 20.5,12V20.6" fill="none" stroke="#1a1a1a" stroke-width="1.2"/><circle cx="2.8" cy="12.4" r="1.7" fill="#e83030"/><circle cx="11.6" cy="12.4" r="1.7" fill="#e83030"/><circle cx="20.5" cy="12.4" r="1.7" fill="#e83030"/></g><g transform="translate(447.0,610.0)"><path d="M3.3,19.8L19.8,3.6" stroke="#2a2a2a" stroke-width="1.2"/><circle cx="3.3" cy="19.8" r="1.9" fill="#e83030"/><circle cx="19.8" cy="3.6" r="1.9" fill="#e83030"/></g><g transform="translate(478.0,610.0)"><path d="M3.3,3.2Q11,3 16.5,7Q20.4,11 21.5,19.5" fill="none" stroke="#2a2a2a" stroke-width="1.2"/><circle cx="3.3" cy="3.2" r="1.9" fill="#e83030"/><circle cx="16.5" cy="7" r="1.9" fill="#e83030"/><circle cx="21.5" cy="19.5" r="1.9" fill="#e83030"/></g><g transform="translate(509.0,610.0)"><circle cx="12.3" cy="11.9" r="10" fill="none" stroke="#2a2a2a" stroke-width="1.2"/></g><g transform="translate(540.0,610.0)"><path d="M2,2H14.4Q21.4,2.6 21.4,9.9V21.5" fill="none" stroke="#a8a8a8" stroke-width="1"/><path d="M14.4,2H21.4V9.9" fill="none" stroke="#b8b8b8" stroke-width="0.8" stroke-dasharray="0.9 0.9"/></g><g transform="translate(571.0,610.0)"><path d="M0.3,1.3H13.2L21.5,10.7V22.8" fill="none" stroke="#a8a8a8" stroke-width="1"/><path d="M13.2,1.3H21.5V10.7" fill="none" stroke="#b8b8b8" stroke-width="0.8" stroke-dasharray="0.9 0.9"/></g><g transform="translate(602.0,610.0)"><rect x="2.4" y="5.2" width="19.2" height="13.3" fill="none" stroke="#2a2a2a" stroke-width="1.2"/><circle cx="2.4" cy="5.2" r="1.9" fill="#e83030"/><circle cx="21.6" cy="18.5" r="1.9" fill="#e83030"/></g><g transform="translate(633.0,610.0)"><path d="M3.4,11.5L8,2.4L8,9.9L15.8,14L22,9.9M15.8,14L15.8,19.8L8,9.9" fill="none" stroke="#8a8a8a" stroke-width="0.9"/>
<path d="M3.4,11.5Q6,8 8,9.9Q12,14 15.8,14Q19.6,13 22,9.9" fill="none" stroke="#3a3a3a" stroke-width="1"/><circle cx="8" cy="2.4" r="2" fill="#8a8a8a"/><circle cx="3.4" cy="11.5" r="2" fill="#8a8a8a"/><circle cx="22" cy="9.9" r="2" fill="#8a8a8a"/><circle cx="15.8" cy="19.8" r="2" fill="#8a8a8a"/><circle cx="8" cy="9.9" r="2" fill="#e83030"/><circle cx="15.8" cy="14" r="2" fill="#e83030"/></g><g transform="translate(664.5,610.0)"><path d="M3.5,11.5H20.5M12,3V20" stroke="#1a1a1a" stroke-width="1.3"/></g><g transform="translate(695.0,610.0)"><path d="M2.2,7.6L6.6,4H15.6V9Q21.8,9.6 22,14.6Q21.8,19.6 16,21.5H2.2Z" fill="none" stroke="#a8a8a8" stroke-width="1.1"/>
<path d="M5.4,10.6Q5.4,7.4 9,7.4Q12.6,7.4 12.6,11.4Q18.6,11.4 18.6,14.8Q18,17.6 13,18.6Q5.4,18 5.4,10.6Z" fill="none" stroke="#b8b8b8" stroke-width="1"/></g><path d="M726.9,620h5.2l-2.6,3.1z" fill="#111"/><rect x="737" y="610" width="1" height="25" fill="#c8c8c8"/><g transform="translate(743.0,610.0)"><path d="M2.2,15.3H13M4.7,1.6L16,22.3" stroke="#a8a8a8" stroke-width="1" fill="none"/><path d="M13,15.3H23" stroke="#a8a8a8" stroke-width="0.9" stroke-dasharray="1 1"/>
<path d="M14.6,10.6L20,5.7L23,8.6L17.6,13.4Z" fill="#dcdcdc" stroke="#c4c4c4" stroke-width="0.6"/></g><g transform="translate(774.0,610.0)"><path d="M2,15.3H13.4M4.3,1.6L16,22.3" stroke="#a8a8a8" stroke-width="1" fill="none"/>
<path d="M12.6,14L13.6,11L21,3.6L23.4,6L16,13Z" fill="#e4e4e4" stroke="#b8b8b8" stroke-width="0.7"/></g><g transform="translate(805.0,610.0)"><path d="M2,10.2H15.5V22.8M9,5.2L20.5,15.7" stroke="#a8a8a8" stroke-width="1" fill="none"/><path d="M15.5,0.8V10.2H24" stroke="#a8a8a8" stroke-width="0.9" stroke-dasharray="1 1" fill="none"/></g><rect x="836" y="610" width="1" height="25" fill="#c8c8c8"/><g transform="translate(842.5,610.0)"><path d="M1.5,8.4V17.6M23.1,8.4V17.6M1.5,12.4H23.1" stroke="#a8a8a8" stroke-width="1" fill="none"/><path d="M1.7,12.4L5.6,10.6V14.2ZM22.9,12.4L19,10.6V14.2Z" fill="#a8a8a8"/>
<path d="M14.6,1.3L9,10H13L7,18.5L19,8.6H14.6L19.6,1.3Z" fill="#e0e0e0" stroke="#c0c0c0" stroke-width="0.6"/></g><path d="M874.9,620h5.2l-2.6,3.1z" fill="#111"/><rect x="885" y="610" width="1" height="25" fill="#c8c8c8"/><g transform="translate(892.0,610.0)"><path d="M2.6,16.5L12.5,7.9M5.6,17.5L15.5,8.9" stroke="#a8a8a8" stroke-width="1"/><path d="M16,13.2V21M10.8,21H22" stroke="#a8a8a8" stroke-width="1.1"/></g><g transform="translate(922.5,610.0)"><path d="M5.6,3.6H2.2V20.6H5.6M18.4,3.6H21.7V20.6H18.4" fill="none" stroke="#a0a0a0" stroke-width="1.5"/><path d="M2.2,20.6H21.7" stroke="#b4b4b4" stroke-width="0.9"/>
<path d="M11.8,1V22.8" stroke="#8a8a8a" stroke-width="0.9" stroke-dasharray="4 1.4 1 1.4"/><path d="M6,3.2H10M17.6,3.2H13.6" stroke="#a8a8a8" stroke-width="0.8"/><path d="M10.6,3.2L8,1.6V4.8ZM13,3.2L15.6,1.6V4.8Z" fill="#a8a8a8"/>
<path d="M8.6,4V9.6M15,4V9.6" stroke="#b8b8b8" stroke-width="0.8"/></g><g transform="translate(954.0,610.0)"><path d="M1,6V14.5L6.8,10.2Z" fill="#c4c4c4"/><path d="M9.8,8.7L20,0.6M12.8,10.2L23,2" stroke="#a8a8a8" stroke-width="1"/><path d="M17.2,12.5V21M11.8,21H23" stroke="#a8a8a8" stroke-width="1.1"/></g><path d="M985.9,620h5.2l-2.6,3.1z" fill="#111"/><rect x="996" y="610" width="1" height="25" fill="#c8c8c8"/><g transform="translate(1002.5,610.0)"><rect x="1.7" y="1.3" width="10.4" height="8.9" fill="#fff" stroke="#a8a8a8" stroke-width="1"/><rect x="10" y="12.4" width="13.2" height="9.9" fill="#fff" stroke="#a8a8a8" stroke-width="1"/>
<rect x="1.2" y="17" width="6.6" height="6.6" fill="#f0f0f0" stroke="#b4b4b4" stroke-width="0.8"/><path d="M2.6,22L6,18.6M3.6,18.4H6.2V21" fill="none" stroke="#8a8a8a" stroke-width="0.8"/>
<path d="M11,15.4L12,12.4L19.6,5L22.2,7.4L14.4,14.6Z" fill="#e4e4e4" stroke="#b4b4b4" stroke-width="0.7"/></g><g transform="translate(1033.5,610.0)"><path d="M9,6.4A4.2,4.2 0 1 0 5,10.6" fill="none" stroke="#a8a8a8" stroke-width="1.3"/>
<path d="M2,14L9,11.6L16.6,14V18.6L9.6,21.6L2,18.6Z" fill="#e8e8e8" stroke="#c0c0c0" stroke-width="0.7"/><path d="M7.6,6.6H10.6V13.6H7.6Z" fill="#d4d4d4" stroke="#c0c0c0" stroke-width="0.6"/><path d="M6.4,7.4L9,4L11.8,7.4Z" fill="#c8c8c8"/>
<path d="M11.6,10.4L12.6,7.6L20,0.8L22.6,3.2L15,10Z" fill="#e0e0e0" stroke="#b0b0b0" stroke-width="0.7"/>
<rect x="13.4" y="15" width="9.6" height="7.6" rx="1" fill="#e4e4e4" stroke="#b8b8b8" stroke-width="0.8"/><path d="M15.4,15V12.6Q15.4,10.4 18.2,10.4Q21,10.4 21,12.6V15" fill="none" stroke="#b8b8b8" stroke-width="1.3"/></g><g transform="translate(1065.0,610.0)"><path d="M9,6.4A4.2,4.2 0 1 0 5,10.6" fill="none" stroke="#a8a8a8" stroke-width="1.3"/>
<path d="M1,15.6L10,12L22,16.6V19L11.6,23.4L1,18.4Z" fill="url(#gGr)" stroke="#c8c8c8" stroke-width="0.6"/><path d="M1,15.6L11.6,19.6L22,16.6L10,12Z" fill="#ececec"/>
<path d="M9.6,6H13.6V16H9.6Z" fill="#dcdcdc" stroke="#c8c8c8" stroke-width="0.6"/><path d="M8,7L11.6,2.6L15.2,7Z" fill="#cfcfcf"/></g><path d="M1095.4,627.5h5.2l-2.6,3.1z" fill="#111"/><g transform="translate(-0.5,644.0)"><path d="M2.2,6.2L10.3,0.7L16.8,3.3V10.5L22.3,12.7V19.2L13.5,23.6L2.2,19.2Z" fill="#e6eaee" stroke="#3a3ad0" stroke-width="1"/>
<path d="M2.2,6.2L9.4,9.4L16.8,3.3M9.4,9.4V21.8M2.2,12.6L9.4,15.8L16.8,10.5M9.4,15.8L13.5,17.6L22.3,12.7M13.5,17.6V23.6M5.6,7.6V20.4M16.8,10.5V15" fill="none" stroke="#3a3a4a" stroke-width="0.7" stroke-dasharray="1 1"/></g><g transform="translate(29.5,644.0)"><rect x="1.6" y="2.4" width="21" height="19.6" fill="#f6f6f6" stroke="#bdbdbd" stroke-width="0.9"/><rect x="1.6" y="2.4" width="21" height="2.6" fill="#c8c8c8"/>
<path d="M5,9.6L9.6,7.4L14,9V13.6L19,15.6V19L14.6,21L5,18Z" fill="#ececec" stroke="#d0d0d0" stroke-width="0.7"/><path d="M5,9.6L9.6,11.4L14,9M9.6,11.4V19.6M14,13.6L9.6,15.4M14.6,17L19,15.6M14.6,17V21" fill="none" stroke="#d4d4d4" stroke-width="0.7"/></g><g transform="translate(60.0,644.0)"><path d="M2.6,3.256L7.300000000000001,1L12.0,3.256V8.520000000000001L7.300000000000001,10.776L2.6,8.520000000000001Z" fill="url(#gG)" stroke="#f0a020" stroke-width="0.9"/><path d="M2.6,3.256L7.300000000000001,5.512L12.0,3.256L7.300000000000001,1Z" fill="#fff6b8" stroke="#f0a020" stroke-width="0.6"/><path d="M3.2,3.856L7.300000000000001,5.912V10.176L3.2,8.120000000000001Z" fill="#fffce4" fill-opacity="0.75"/><path d="M2.6,13.256L7.300000000000001,11L12.0,13.256V18.520000000000003L7.300000000000001,20.776000000000003L2.6,18.520000000000003Z" fill="url(#gG)" stroke="#f0a020" stroke-width="0.9"/><path d="M2.6,13.256L7.300000000000001,15.512L12.0,13.256L7.300000000000001,11Z" fill="#fff6b8" stroke="#f0a020" stroke-width="0.6"/><path d="M3.2,13.856L7.300000000000001,15.912V20.176000000000002L3.2,18.120000000000005Z" fill="#fffce4" fill-opacity="0.75"/><path d="M8.8,13.656L13.5,11.4L18.200000000000003,13.656V18.92L13.5,21.176000000000002L8.8,18.92Z" fill="url(#gG)" stroke="#f0a020" stroke-width="0.9"/><path d="M8.8,13.656L13.5,15.911999999999999L18.200000000000003,13.656L13.5,11.4Z" fill="#fff6b8" stroke="#f0a020" stroke-width="0.6"/><path d="M9.4,14.256L13.5,16.311999999999998V20.576L9.4,18.520000000000003Z" fill="#fffce4" fill-opacity="0.75"/><path d="M20,1V9M16,5H24" stroke="#2a7ae8" stroke-width="1.7"/></g><path d="M92.60000000000001,654h5.2l-2.6,3.1z" fill="#111"/><g transform="translate(104.0,644.0)"><path d="M7.6,8.904L12.399999999999999,6.6L17.2,8.904V14.280000000000001L12.399999999999999,16.584L7.6,14.280000000000001Z" fill="url(#gG)" stroke="#f0a020" stroke-width="0.9"/><path d="M7.6,8.904L12.399999999999999,11.207999999999998L17.2,8.904L12.399999999999999,6.6Z" fill="#fff6b8" stroke="#f0a020" stroke-width="0.6"/><path d="M8.2,9.504L12.399999999999999,11.607999999999999V15.984L8.2,13.88Z" fill="#fffce4" fill-opacity="0.75"/><path d="M16,1.8H22.4V7.6M17,4.2H19.8V7.2" fill="none" stroke="#2a4ad0" stroke-width="1"/>
<path d="M8.6,22.2H2.4V16M8,19.8H4.8V16.6" fill="none" stroke="#2a4ad0" stroke-width="1" stroke-dasharray="1.4 1"/></g><g transform="translate(134.5,644.0)"><path d="M4.4,0.8L10.8,5.6L4.4,10.4Z" fill="#3a3ad8"/><path d="M19.6,0.8L13.2,5.6L19.6,10.4Z" fill="#3a3ad8"/>
<path d="M12,0V23" stroke="#1a1a1a" stroke-width="1" stroke-dasharray="2.4 1.4"/>
<rect x="1.6" y="14.2" width="8" height="8" fill="#f8e860" stroke="#b89820" stroke-width="0.9"/><path d="M14,22.4V13L22.4,22.4Z" fill="#d83030" stroke="#a02020" stroke-width="0.8"/></g><g transform="translate(165.0,644.0)"><path d="M1.6,5.6L7.6,9.6L1.6,13.6Z" fill="#28b84a"/><path d="M4,13L9.4,16.6L4,20.6Z" fill="#d84a3a"/>
<path d="M18.4,1.4V9.6M13.6,9.6H23.4" stroke="#8a2a8a" stroke-width="1.1"/><path d="M13,20.6L22,13.4M15.4,22.4L24,15.6" stroke="#8a2a8a" stroke-width="1.1"/></g><rect x="196" y="644" width="1" height="25" fill="#c8c8c8"/><g transform="translate(202.5,644.0)"><rect x="9.6" y="1.4" width="6" height="6" fill="#f8f4a0" stroke="#6a6a9a" stroke-width="0.9"/><rect x="9.6" y="7.6" width="6" height="6" fill="#f8f4a0" stroke="#6a6a9a" stroke-width="0.9"/><rect x="15.8" y="7.6" width="6" height="6" fill="#f8f4a0" stroke="#6a6a9a" stroke-width="0.9"/>
<path d="M1.6,19.6Q0.6,17.6 2,16.6L4,18.6L6,17.6L5.4,15.6Q8,15 9.6,12.6Q10,9.6 13,10Q15.4,11 14.6,14Q12.6,16.6 9.6,16Q7,21 4.6,22.6Q2.6,22.6 1.6,19.6Z" fill="#f0c050" stroke="#b88a20" stroke-width="0.7"/></g><g transform="translate(233.5,644.0)"><path d="M3.4,3.304L8.2,1L13.0,3.304V8.68L8.2,10.984L3.4,8.68Z" fill="url(#gG)" stroke="#f0a020" stroke-width="0.9"/><path d="M3.4,3.304L8.2,5.608L13.0,3.304L8.2,1Z" fill="#fff6b8" stroke="#f0a020" stroke-width="0.6"/><path d="M4.0,3.904L8.2,6.008V10.384L4.0,8.28Z" fill="#fffce4" fill-opacity="0.75"/><path d="M3.4,13.904L8.2,11.6L13.0,13.904V19.28L8.2,21.584L3.4,19.28Z" fill="url(#gG)" stroke="#f0a020" stroke-width="0.9"/><path d="M3.4,13.904L8.2,16.208L13.0,13.904L8.2,11.6Z" fill="#fff6b8" stroke="#f0a020" stroke-width="0.6"/><path d="M4.0,14.504L8.2,16.607999999999997V20.983999999999998L4.0,18.880000000000003Z" fill="#fffce4" fill-opacity="0.75"/><path d="M14,14.304L18.8,12L23.6,14.304V19.68L18.8,21.984L14,19.68Z" fill="url(#gG)" stroke="#f0a020" stroke-width="0.9"/><path d="M14,14.304L18.8,16.608L23.6,14.304L18.8,12Z" fill="#fff6b8" stroke="#f0a020" stroke-width="0.6"/><path d="M14.6,14.904L18.8,17.008V21.384L14.6,19.28Z" fill="#fffce4" fill-opacity="0.75"/></g><g transform="translate(264.0,644.0)"><path d="M18,9L14,14.6M13,16L9.6,20" stroke="#2a2a2a" stroke-width="1"/>
<rect x="14.5" y="2.3" width="6.5" height="6.3" fill="#fff" stroke="#2a2a2a" stroke-width="1.2"/><rect x="10" y="8.6" width="6.7" height="6.4" fill="#f4f4f4" stroke="#2a2a2a" stroke-width="1.2"/>
<rect x="6" y="14.4" width="6.9" height="6.6" fill="#f8f070" stroke="#e02020" stroke-width="1.3"/></g><rect x="295" y="644" width="1" height="25" fill="#c8c8c8"/><g transform="translate(301.5,644.0)"><path d="M2.6,6.6L12.6,0.8L22.6,5.4V17.4L13.6,23.4L2.6,18Z" fill="url(#gGrd)" stroke="#5a5a5a" stroke-width="0.8"/>
<path d="M2.6,6.6L12.6,0.8L22.6,5.4L13.6,11Z" fill="#e8e8e8" stroke="#5a5a5a" stroke-width="0.6"/><path d="M2.6,6.6L13.6,11V23.4L2.6,18Z" fill="#c4c4c4" stroke="#5a5a5a" stroke-width="0.6"/>
<path d="M17.6,12.6Q21.6,12 20.6,8" fill="none" stroke="#4a4a4a" stroke-width="0.7"/>
<path d="M0.6,15.6L13,12.6L16.6,15L14,19.6L2,22.6Z" fill="#fbe0a8" stroke="#f08a30" stroke-width="0.9"/><path d="M3,17L11,15M3.4,19L11.6,17M4,21L10,19.4" stroke="#8a7a5a" stroke-width="0.7"/><circle cx="14" cy="15.4" r="1" fill="#c83030"/></g><rect x="332" y="644" width="1" height="25" fill="#c8c8c8"/><g transform="translate(339.0,644.0)"><ellipse cx="10" cy="8" rx="3.6" ry="6.4" transform="rotate(-12 10 8)" fill="none" stroke="#9a8a20" stroke-width="2.7"/><ellipse cx="10" cy="8" rx="3.6" ry="6.4" transform="rotate(-12 10 8)" fill="none" stroke="#e8d860" stroke-width="1.5"/><ellipse cx="14" cy="16" rx="3.6" ry="6.2" transform="rotate(-8 14 16)" fill="none" stroke="#9a8a20" stroke-width="2.7"/><ellipse cx="14" cy="16" rx="3.6" ry="6.2" transform="rotate(-8 14 16)" fill="none" stroke="#e8d860" stroke-width="1.5"/></g><g transform="translate(369.0,644.0)"><rect x="6" y="2.6" width="16.6" height="3.6" fill="#f4f4f4" stroke="#3a3a3a" stroke-width="0.9"/><path d="M9.6,2.6V6.2" stroke="#3a3a3a" stroke-width="0.8"/><path d="M6,4.4H2V10" fill="none" stroke="#3a3a3a" stroke-width="0.9"/><path d="M0.4,9L2,12.4L3.6,9Z" fill="#3a3a3a"/><ellipse cx="15.6" cy="12.4" rx="2.6" ry="4.4" transform="rotate(-12 15.6 12.4)" fill="none" stroke="#9a8a20" stroke-width="2.4"/><ellipse cx="15.6" cy="12.4" rx="2.6" ry="4.4" transform="rotate(-12 15.6 12.4)" fill="none" stroke="#e8d860" stroke-width="1.2"/><ellipse cx="18.4" cy="18" rx="2.6" ry="4.4" transform="rotate(-8 18.4 18)" fill="none" stroke="#9a8a20" stroke-width="2.4"/><ellipse cx="18.4" cy="18" rx="2.6" ry="4.4" transform="rotate(-8 18.4 18)" fill="none" stroke="#e8d860" stroke-width="1.2"/></g><g transform="translate(400.5,644.0)"><path d="M6,12.2L12,3.4H16M6,12.2L12,9.4H16M6,12.2L13,20" fill="none" stroke="#3a3a4a" stroke-width="0.9"/>
<rect x="0.8" y="10.6" width="8" height="3.2" rx="1.4" fill="#c8d8f8" stroke="#4a6ad0" stroke-width="0.8"/><rect x="14.6" y="1.8" width="8.6" height="3.2" rx="1.4" fill="#c8d8f8" stroke="#4a6ad0" stroke-width="0.8"/><rect x="14.6" y="7.8" width="8.6" height="3.2" rx="1.4" fill="#c8d8f8" stroke="#4a6ad0" stroke-width="0.8"/>
<rect x="13.6" y="13.6" width="10" height="10" fill="#f4f4ff" stroke="#2a2ab0" stroke-width="1.1"/><text x="18.6" y="22.4" font-family="Liberation Serif, serif" font-weight="bold" font-size="10" text-anchor="middle" fill="#2a2ab0">i</text></g><rect x="431" y="644" width="1" height="25" fill="#c8c8c8"/><g transform="translate(435.5,644.0)"><path d="M10,4.3759999999999994L16.2,1.4L22.4,4.3759999999999994V11.32L16.2,14.296000000000001L10,11.32Z" fill="#e8eaec" fill-opacity="0.8" stroke="#4a4a4a" stroke-width="0.9"/><path d="M10,4.3759999999999994L16.2,7.352L22.4,4.3759999999999994M16.2,7.352V14.296000000000001" fill="none" stroke="#4a4a4a" stroke-width="0.8"/><path d="M10,11.32L16.2,8.344000000000001L22.4,11.32M16.2,1.4V8.344000000000001" fill="none" stroke="#9a9a9a" stroke-width="0.6"/><path d="M1.4,11.576L7.6,8.6L13.8,11.576V18.520000000000003L7.6,21.496000000000002L1.4,18.520000000000003Z" fill="#e8eaec" fill-opacity="0.8" stroke="#4a4a4a" stroke-width="0.9"/><path d="M1.4,11.576L7.6,14.552L13.8,11.576M7.6,14.552V21.496000000000002" fill="none" stroke="#4a4a4a" stroke-width="0.8"/><path d="M1.4,18.520000000000003L7.6,15.544L13.8,18.520000000000003M7.6,8.6V15.544" fill="none" stroke="#9a9a9a" stroke-width="0.6"/><circle cx="11.6" cy="10.6" r="1.3" fill="#e83030"/></g><path d="M465.59999999999997,654.5h5.2l-2.6,3.1z" fill="#111"/><path d="M476.4,661h5.2l-2.6,3.1z" fill="#111"/><path d="M13.5,155V565" stroke="#9a9a9a" stroke-width="1" stroke-dasharray="1 1"/><rect x="9.5" y="161.5" width="8" height="8" fill="#fff" stroke="#dcdcdc" stroke-width="1"/><path d="M10.9,165.5h5.4M13.6,162.8v5.4" stroke="#111" stroke-width="1.2"/><path d="M19,165.5H23" stroke="#9a9a9a" stroke-width="1" stroke-dasharray="1 1"/><g transform="translate(39.2,157.4)"><path d="M0,2.016L4.2,4.032V8.736L0,6.720000000000001Z" fill="url(#gTl)" stroke="#b88608" stroke-width="0.7" stroke-linejoin="round"/><path d="M4.2,4.032L8.4,2.016V6.720000000000001L4.2,8.736Z" fill="url(#gTr)" stroke="#b88608" stroke-width="0.7" stroke-linejoin="round"/><path d="M0,2.016L4.2,0L8.4,2.016L4.2,4.032Z" fill="#fffbd0" stroke="#c89410" stroke-width="0.7" stroke-linejoin="round"/><path d="M0,8.216000000000001L4.2,10.232V14.936L0,12.920000000000002Z" fill="url(#gTl)" stroke="#b88608" stroke-width="0.7" stroke-linejoin="round"/><path d="M4.2,10.232L8.4,8.216000000000001V12.920000000000002L4.2,14.936Z" fill="url(#gTr)" stroke="#b88608" stroke-width="0.7" stroke-linejoin="round"/><path d="M0,8.216000000000001L4.2,6.2L8.4,8.216000000000001L4.2,10.232Z" fill="#fffbd0" stroke="#c89410" stroke-width="0.7" stroke-linejoin="round"/><path d="M6.4,8.616L10.600000000000001,10.632V15.336L6.4,13.32Z" fill="url(#gTl)" stroke="#b88608" stroke-width="0.7" stroke-linejoin="round"/><path d="M10.600000000000001,10.632L14.8,8.616V13.32L10.600000000000001,15.336Z" fill="url(#gTr)" stroke="#b88608" stroke-width="0.7" stroke-linejoin="round"/><path d="M6.4,8.616L10.600000000000001,6.6L14.8,8.616L10.600000000000001,10.632Z" fill="#fffbd0" stroke="#c89410" stroke-width="0.7" stroke-linejoin="round"/></g><g transform="translate(25,159)"><rect x="0.5" y="0.5" width="11" height="11" fill="#fff" stroke="#111" stroke-width="1"/><path d="M1.5,5.7L3.5,4.2L4.9,7.2Q7.2,3.2 10.9,1.1Q7.8,5.2 5.7,10.7L4.1,10.7Z" fill="#e8141c" stroke="#e8141c" stroke-width="0.5" stroke-linejoin="round"/></g><path d="M14,185.5H23" stroke="#9a9a9a" stroke-width="1" stroke-dasharray="1 1"/><g transform="translate(40.2,177.6)"><path d="M1,3.48L7.0,6.359999999999999V13.08L1,10.200000000000001Z" fill="url(#gTl)" stroke="#b88608" stroke-width="0.7" stroke-linejoin="round"/><path d="M7.0,6.359999999999999L13,3.48V10.200000000000001L7.0,13.08Z" fill="url(#gTr)" stroke="#b88608" stroke-width="0.7" stroke-linejoin="round"/><path d="M1,3.48L7.0,0.6L13,3.48L7.0,6.359999999999999Z" fill="#fffbd0" stroke="#c89410" stroke-width="0.7" stroke-linejoin="round"/></g><g transform="translate(25,179)"><rect x="0.5" y="0.5" width="11" height="11" fill="#fff" stroke="#111" stroke-width="1"/><path d="M1.5,5.7L3.5,4.2L4.9,7.2Q7.2,3.2 10.9,1.1Q7.8,5.2 5.7,10.7L4.1,10.7Z" fill="#e8141c" stroke="#e8141c" stroke-width="0.5" stroke-linejoin="round"/></g><rect x="9.5" y="201.5" width="8" height="8" fill="#fff" stroke="#dcdcdc" stroke-width="1"/><path d="M10.9,205.5h5.4M13.6,202.8v5.4" stroke="#111" stroke-width="1.2"/><path d="M19,205.5H23" stroke="#9a9a9a" stroke-width="1" stroke-dasharray="1 1"/><g transform="translate(39.2,197.4)"><path d="M0,2.016L4.2,4.032V8.736L0,6.720000000000001Z" fill="url(#gTl)" stroke="#b88608" stroke-width="0.7" stroke-linejoin="round"/><path d="M4.2,4.032L8.4,2.016V6.720000000000001L4.2,8.736Z" fill="url(#gTr)" stroke="#b88608" stroke-width="0.7" stroke-linejoin="round"/><path d="M0,2.016L4.2,0L8.4,2.016L4.2,4.032Z" fill="#fffbd0" stroke="#c89410" stroke-width="0.7" stroke-linejoin="round"/><path d="M0,8.216000000000001L4.2,10.232V14.936L0,12.920000000000002Z" fill="url(#gTl)" stroke="#b88608" stroke-width="0.7" stroke-linejoin="round"/><path d="M4.2,10.232L8.4,8.216000000000001V12.920000000000002L4.2,14.936Z" fill="url(#gTr)" stroke="#b88608" stroke-width="0.7" stroke-linejoin="round"/><path d="M0,8.216000000000001L4.2,6.2L8.4,8.216000000000001L4.2,10.232Z" fill="#fffbd0" stroke="#c89410" stroke-width="0.7" stroke-linejoin="round"/><path d="M6.4,8.616L10.600000000000001,10.632V15.336L6.4,13.32Z" fill="url(#gTl)" stroke="#b88608" stroke-width="0.7" stroke-linejoin="round"/><path d="M10.600000000000001,10.632L14.8,8.616V13.32L10.600000000000001,15.336Z" fill="url(#gTr)" stroke="#b88608" stroke-width="0.7" stroke-linejoin="round"/><path d="M6.4,8.616L10.600000000000001,6.6L14.8,8.616L10.600000000000001,10.632Z" fill="#fffbd0" stroke="#c89410" stroke-width="0.7" stroke-linejoin="round"/></g><g transform="translate(25,199)"><rect x="0.5" y="0.5" width="11" height="11" fill="#fff" stroke="#111" stroke-width="1"/><path d="M1.5,5.7L3.5,4.2L4.9,7.2Q7.2,3.2 10.9,1.1Q7.8,5.2 5.7,10.7L4.1,10.7Z" fill="#e8141c" stroke="#e8141c" stroke-width="0.5" stroke-linejoin="round"/></g><path d="M14,225.5H23" stroke="#9a9a9a" stroke-width="1" stroke-dasharray="1 1"/><g transform="translate(40.2,217.6)"><path d="M1,3.48L7.0,6.359999999999999V13.08L1,10.200000000000001Z" fill="url(#gTl)" stroke="#b88608" stroke-width="0.7" stroke-linejoin="round"/><path d="M7.0,6.359999999999999L13,3.48V10.200000000000001L7.0,13.08Z" fill="url(#gTr)" stroke="#b88608" stroke-width="0.7" stroke-linejoin="round"/><path d="M1,3.48L7.0,0.6L13,3.48L7.0,6.359999999999999Z" fill="#fffbd0" stroke="#c89410" stroke-width="0.7" stroke-linejoin="round"/></g><g transform="translate(25,219)"><rect x="0.5" y="0.5" width="11" height="11" fill="#fff" stroke="#111" stroke-width="1"/><path d="M1.5,5.7L3.5,4.2L4.9,7.2Q7.2,3.2 10.9,1.1Q7.8,5.2 5.7,10.7L4.1,10.7Z" fill="#e8141c" stroke="#e8141c" stroke-width="0.5" stroke-linejoin="round"/></g><rect x="9.5" y="241.5" width="8" height="8" fill="#fff" stroke="#dcdcdc" stroke-width="1"/><path d="M10.9,245.5h5.4M13.6,242.8v5.4" stroke="#111" stroke-width="1.2"/><path d="M19,245.5H23" stroke="#9a9a9a" stroke-width="1" stroke-dasharray="1 1"/><g transform="translate(39.2,237.4)"><path d="M0,2.016L4.2,4.032V8.736L0,6.720000000000001Z" fill="url(#gTl)" stroke="#b88608" stroke-width="0.7" stroke-linejoin="round"/><path d="M4.2,4.032L8.4,2.016V6.720000000000001L4.2,8.736Z" fill="url(#gTr)" stroke="#b88608" stroke-width="0.7" stroke-linejoin="round"/><path d="M0,2.016L4.2,0L8.4,2.016L4.2,4.032Z" fill="#fffbd0" stroke="#c89410" stroke-width="0.7" stroke-linejoin="round"/><path d="M0,8.216000000000001L4.2,10.232V14.936L0,12.920000000000002Z" fill="url(#gTl)" stroke="#b88608" stroke-width="0.7" stroke-linejoin="round"/><path d="M4.2,10.232L8.4,8.216000000000001V12.920000000000002L4.2,14.936Z" fill="url(#gTr)" stroke="#b88608" stroke-width="0.7" stroke-linejoin="round"/><path d="M0,8.216000000000001L4.2,6.2L8.4,8.216000000000001L4.2,10.232Z" fill="#fffbd0" stroke="#c89410" stroke-width="0.7" stroke-linejoin="round"/><path d="M6.4,8.616L10.600000000000001,10.632V15.336L6.4,13.32Z" fill="url(#gTl)" stroke="#b88608" stroke-width="0.7" stroke-linejoin="round"/><path d="M10.600000000000001,10.632L14.8,8.616V13.32L10.600000000000001,15.336Z" fill="url(#gTr)" stroke="#b88608" stroke-width="0.7" stroke-linejoin="round"/><path d="M6.4,8.616L10.600000000000001,6.6L14.8,8.616L10.600000000000001,10.632Z" fill="#fffbd0" stroke="#c89410" stroke-width="0.7" stroke-linejoin="round"/></g><g transform="translate(25,239)"><rect x="0.5" y="0.5" width="11" height="11" fill="#fff" stroke="#111" stroke-width="1"/><path d="M1.5,5.7L3.5,4.2L4.9,7.2Q7.2,3.2 10.9,1.1Q7.8,5.2 5.7,10.7L4.1,10.7Z" fill="#e8141c" stroke="#e8141c" stroke-width="0.5" stroke-linejoin="round"/></g><path d="M14,265.5H23" stroke="#9a9a9a" stroke-width="1" stroke-dasharray="1 1"/><g transform="translate(40.2,257.6)"><path d="M1,3.48L7.0,6.359999999999999V13.08L1,10.200000000000001Z" fill="url(#gTl)" stroke="#b88608" stroke-width="0.7" stroke-linejoin="round"/><path d="M7.0,6.359999999999999L13,3.48V10.200000000000001L7.0,13.08Z" fill="url(#gTr)" stroke="#b88608" stroke-width="0.7" stroke-linejoin="round"/><path d="M1,3.48L7.0,0.6L13,3.48L7.0,6.359999999999999Z" fill="#fffbd0" stroke="#c89410" stroke-width="0.7" stroke-linejoin="round"/></g><g transform="translate(25,259)"><rect x="0.5" y="0.5" width="11" height="11" fill="#fff" stroke="#111" stroke-width="1"/><path d="M1.5,5.7L3.5,4.2L4.9,7.2Q7.2,3.2 10.9,1.1Q7.8,5.2 5.7,10.7L4.1,10.7Z" fill="#e8141c" stroke="#e8141c" stroke-width="0.5" stroke-linejoin="round"/></g><rect x="9.5" y="281.5" width="8" height="8" fill="#fff" stroke="#dcdcdc" stroke-width="1"/><path d="M10.9,285.5h5.4M13.6,282.8v5.4" stroke="#111" stroke-width="1.2"/><path d="M19,285.5H23" stroke="#9a9a9a" stroke-width="1" stroke-dasharray="1 1"/><g transform="translate(39.2,277.4)"><path d="M0,2.016L4.2,4.032V8.736L0,6.720000000000001Z" fill="url(#gTl)" stroke="#b88608" stroke-width="0.7" stroke-linejoin="round"/><path d="M4.2,4.032L8.4,2.016V6.720000000000001L4.2,8.736Z" fill="url(#gTr)" stroke="#b88608" stroke-width="0.7" stroke-linejoin="round"/><path d="M0,2.016L4.2,0L8.4,2.016L4.2,4.032Z" fill="#fffbd0" stroke="#c89410" stroke-width="0.7" stroke-linejoin="round"/><path d="M0,8.216000000000001L4.2,10.232V14.936L0,12.920000000000002Z" fill="url(#gTl)" stroke="#b88608" stroke-width="0.7" stroke-linejoin="round"/><path d="M4.2,10.232L8.4,8.216000000000001V12.920000000000002L4.2,14.936Z" fill="url(#gTr)" stroke="#b88608" stroke-width="0.7" stroke-linejoin="round"/><path d="M0,8.216000000000001L4.2,6.2L8.4,8.216000000000001L4.2,10.232Z" fill="#fffbd0" stroke="#c89410" stroke-width="0.7" stroke-linejoin="round"/><path d="M6.4,8.616L10.600000000000001,10.632V15.336L6.4,13.32Z" fill="url(#gTl)" stroke="#b88608" stroke-width="0.7" stroke-linejoin="round"/><path d="M10.600000000000001,10.632L14.8,8.616V13.32L10.600000000000001,15.336Z" fill="url(#gTr)" stroke="#b88608" stroke-width="0.7" stroke-linejoin="round"/><path d="M6.4,8.616L10.600000000000001,6.6L14.8,8.616L10.600000000000001,10.632Z" fill="#fffbd0" stroke="#c89410" stroke-width="0.7" stroke-linejoin="round"/></g><g transform="translate(25,279)"><rect x="0.5" y="0.5" width="11" height="11" fill="#fff" stroke="#111" stroke-width="1"/><path d="M1.5,5.7L3.5,4.2L4.9,7.2Q7.2,3.2 10.9,1.1Q7.8,5.2 5.7,10.7L4.1,10.7Z" fill="#e8141c" stroke="#e8141c" stroke-width="0.5" stroke-linejoin="round"/></g><path d="M14,305.5H23" stroke="#9a9a9a" stroke-width="1" stroke-dasharray="1 1"/><g transform="translate(40.2,297.6)"><path d="M1,3.48L7.0,6.359999999999999V13.08L1,10.200000000000001Z" fill="url(#gTl)" stroke="#b88608" stroke-width="0.7" stroke-linejoin="round"/><path d="M7.0,6.359999999999999L13,3.48V10.200000000000001L7.0,13.08Z" fill="url(#gTr)" stroke="#b88608" stroke-width="0.7" stroke-linejoin="round"/><path d="M1,3.48L7.0,0.6L13,3.48L7.0,6.359999999999999Z" fill="#fffbd0" stroke="#c89410" stroke-width="0.7" stroke-linejoin="round"/></g><g transform="translate(25,299)"><rect x="0.5" y="0.5" width="11" height="11" fill="#fff" stroke="#111" stroke-width="1"/><path d="M1.5,5.7L3.5,4.2L4.9,7.2Q7.2,3.2 10.9,1.1Q7.8,5.2 5.7,10.7L4.1,10.7Z" fill="#e8141c" stroke="#e8141c" stroke-width="0.5" stroke-linejoin="round"/></g><rect x="9.5" y="321.5" width="8" height="8" fill="#fff" stroke="#dcdcdc" stroke-width="1"/><path d="M10.9,325.5h5.4M13.6,322.8v5.4" stroke="#111" stroke-width="1.2"/><path d="M19,325.5H23" stroke="#9a9a9a" stroke-width="1" stroke-dasharray="1 1"/><g transform="translate(39.2,317.4)"><path d="M0,2.016L4.2,4.032V8.736L0,6.720000000000001Z" fill="url(#gTl)" stroke="#b88608" stroke-width="0.7" stroke-linejoin="round"/><path d="M4.2,4.032L8.4,2.016V6.720000000000001L4.2,8.736Z" fill="url(#gTr)" stroke="#b88608" stroke-width="0.7" stroke-linejoin="round"/><path d="M0,2.016L4.2,0L8.4,2.016L4.2,4.032Z" fill="#fffbd0" stroke="#c89410" stroke-width="0.7" stroke-linejoin="round"/><path d="M0,8.216000000000001L4.2,10.232V14.936L0,12.920000000000002Z" fill="url(#gTl)" stroke="#b88608" stroke-width="0.7" stroke-linejoin="round"/><path d="M4.2,10.232L8.4,8.216000000000001V12.920000000000002L4.2,14.936Z" fill="url(#gTr)" stroke="#b88608" stroke-width="0.7" stroke-linejoin="round"/><path d="M0,8.216000000000001L4.2,6.2L8.4,8.216000000000001L4.2,10.232Z" fill="#fffbd0" stroke="#c89410" stroke-width="0.7" stroke-linejoin="round"/><path d="M6.4,8.616L10.600000000000001,10.632V15.336L6.4,13.32Z" fill="url(#gTl)" stroke="#b88608" stroke-width="0.7" stroke-linejoin="round"/><path d="M10.600000000000001,10.632L14.8,8.616V13.32L10.600000000000001,15.336Z" fill="url(#gTr)" stroke="#b88608" stroke-width="0.7" stroke-linejoin="round"/><path d="M6.4,8.616L10.600000000000001,6.6L14.8,8.616L10.600000000000001,10.632Z" fill="#fffbd0" stroke="#c89410" stroke-width="0.7" stroke-linejoin="round"/></g><g transform="translate(25,319)"><rect x="0.5" y="0.5" width="11" height="11" fill="#fff" stroke="#111" stroke-width="1"/><path d="M1.5,5.7L3.5,4.2L4.9,7.2Q7.2,3.2 10.9,1.1Q7.8,5.2 5.7,10.7L4.1,10.7Z" fill="#e8141c" stroke="#e8141c" stroke-width="0.5" stroke-linejoin="round"/></g><path d="M14,345.5H23" stroke="#9a9a9a" stroke-width="1" stroke-dasharray="1 1"/><g transform="translate(40.2,337.6)"><path d="M1,3.48L7.0,6.359999999999999V13.08L1,10.200000000000001Z" fill="url(#gTl)" stroke="#b88608" stroke-width="0.7" stroke-linejoin="round"/><path d="M7.0,6.359999999999999L13,3.48V10.200000000000001L7.0,13.08Z" fill="url(#gTr)" stroke="#b88608" stroke-width="0.7" stroke-linejoin="round"/><path d="M1,3.48L7.0,0.6L13,3.48L7.0,6.359999999999999Z" fill="#fffbd0" stroke="#c89410" stroke-width="0.7" stroke-linejoin="round"/></g><g transform="translate(25,339)"><rect x="0.5" y="0.5" width="11" height="11" fill="#fff" stroke="#111" stroke-width="1"/><path d="M1.5,5.7L3.5,4.2L4.9,7.2Q7.2,3.2 10.9,1.1Q7.8,5.2 5.7,10.7L4.1,10.7Z" fill="#e8141c" stroke="#e8141c" stroke-width="0.5" stroke-linejoin="round"/></g><rect x="9.5" y="361.5" width="8" height="8" fill="#fff" stroke="#dcdcdc" stroke-width="1"/><path d="M10.9,365.5h5.4M13.6,362.8v5.4" stroke="#111" stroke-width="1.2"/><path d="M19,365.5H23" stroke="#9a9a9a" stroke-width="1" stroke-dasharray="1 1"/><g transform="translate(39.2,357.4)"><path d="M0,2.016L4.2,4.032V8.736L0,6.720000000000001Z" fill="url(#gTl)" stroke="#b88608" stroke-width="0.7" stroke-linejoin="round"/><path d="M4.2,4.032L8.4,2.016V6.720000000000001L4.2,8.736Z" fill="url(#gTr)" stroke="#b88608" stroke-width="0.7" stroke-linejoin="round"/><path d="M0,2.016L4.2,0L8.4,2.016L4.2,4.032Z" fill="#fffbd0" stroke="#c89410" stroke-width="0.7" stroke-linejoin="round"/><path d="M0,8.216000000000001L4.2,10.232V14.936L0,12.920000000000002Z" fill="url(#gTl)" stroke="#b88608" stroke-width="0.7" stroke-linejoin="round"/><path d="M4.2,10.232L8.4,8.216000000000001V12.920000000000002L4.2,14.936Z" fill="url(#gTr)" stroke="#b88608" stroke-width="0.7" stroke-linejoin="round"/><path d="M0,8.216000000000001L4.2,6.2L8.4,8.216000000000001L4.2,10.232Z" fill="#fffbd0" stroke="#c89410" stroke-width="0.7" stroke-linejoin="round"/><path d="M6.4,8.616L10.600000000000001,10.632V15.336L6.4,13.32Z" fill="url(#gTl)" stroke="#b88608" stroke-width="0.7" stroke-linejoin="round"/><path d="M10.600000000000001,10.632L14.8,8.616V13.32L10.600000000000001,15.336Z" fill="url(#gTr)" stroke="#b88608" stroke-width="0.7" stroke-linejoin="round"/><path d="M6.4,8.616L10.600000000000001,6.6L14.8,8.616L10.600000000000001,10.632Z" fill="#fffbd0" stroke="#c89410" stroke-width="0.7" stroke-linejoin="round"/></g><g transform="translate(25,359)"><rect x="0.5" y="0.5" width="11" height="11" fill="#fff" stroke="#111" stroke-width="1"/><path d="M1.5,5.7L3.5,4.2L4.9,7.2Q7.2,3.2 10.9,1.1Q7.8,5.2 5.7,10.7L4.1,10.7Z" fill="#e8141c" stroke="#e8141c" stroke-width="0.5" stroke-linejoin="round"/></g><path d="M14,385.5H23" stroke="#9a9a9a" stroke-width="1" stroke-dasharray="1 1"/><g transform="translate(40.2,377.6)"><path d="M1,3.48L7.0,6.359999999999999V13.08L1,10.200000000000001Z" fill="url(#gTl)" stroke="#b88608" stroke-width="0.7" stroke-linejoin="round"/><path d="M7.0,6.359999999999999L13,3.48V10.200000000000001L7.0,13.08Z" fill="url(#gTr)" stroke="#b88608" stroke-width="0.7" stroke-linejoin="round"/><path d="M1,3.48L7.0,0.6L13,3.48L7.0,6.359999999999999Z" fill="#fffbd0" stroke="#c89410" stroke-width="0.7" stroke-linejoin="round"/></g><g transform="translate(25,379)"><rect x="0.5" y="0.5" width="11" height="11" fill="#fff" stroke="#111" stroke-width="1"/><path d="M1.5,5.7L3.5,4.2L4.9,7.2Q7.2,3.2 10.9,1.1Q7.8,5.2 5.7,10.7L4.1,10.7Z" fill="#e8141c" stroke="#e8141c" stroke-width="0.5" stroke-linejoin="round"/></g><rect x="9.5" y="401.5" width="8" height="8" fill="#fff" stroke="#dcdcdc" stroke-width="1"/><path d="M10.9,405.5h5.4M13.6,402.8v5.4" stroke="#111" stroke-width="1.2"/><path d="M19,405.5H23" stroke="#9a9a9a" stroke-width="1" stroke-dasharray="1 1"/><g transform="translate(39.2,397.4)"><path d="M0,2.016L4.2,4.032V8.736L0,6.720000000000001Z" fill="url(#gTl)" stroke="#b88608" stroke-width="0.7" stroke-linejoin="round"/><path d="M4.2,4.032L8.4,2.016V6.720000000000001L4.2,8.736Z" fill="url(#gTr)" stroke="#b88608" stroke-width="0.7" stroke-linejoin="round"/><path d="M0,2.016L4.2,0L8.4,2.016L4.2,4.032Z" fill="#fffbd0" stroke="#c89410" stroke-width="0.7" stroke-linejoin="round"/><path d="M0,8.216000000000001L4.2,10.232V14.936L0,12.920000000000002Z" fill="url(#gTl)" stroke="#b88608" stroke-width="0.7" stroke-linejoin="round"/><path d="M4.2,10.232L8.4,8.216000000000001V12.920000000000002L4.2,14.936Z" fill="url(#gTr)" stroke="#b88608" stroke-width="0.7" stroke-linejoin="round"/><path d="M0,8.216000000000001L4.2,6.2L8.4,8.216000000000001L4.2,10.232Z" fill="#fffbd0" stroke="#c89410" stroke-width="0.7" stroke-linejoin="round"/><path d="M6.4,8.616L10.600000000000001,10.632V15.336L6.4,13.32Z" fill="url(#gTl)" stroke="#b88608" stroke-width="0.7" stroke-linejoin="round"/><path d="M10.600000000000001,10.632L14.8,8.616V13.32L10.600000000000001,15.336Z" fill="url(#gTr)" stroke="#b88608" stroke-width="0.7" stroke-linejoin="round"/><path d="M6.4,8.616L10.600000000000001,6.6L14.8,8.616L10.600000000000001,10.632Z" fill="#fffbd0" stroke="#c89410" stroke-width="0.7" stroke-linejoin="round"/></g><g transform="translate(25,399)"><rect x="0.5" y="0.5" width="11" height="11" fill="#fff" stroke="#111" stroke-width="1"/><path d="M1.5,5.7L3.5,4.2L4.9,7.2Q7.2,3.2 10.9,1.1Q7.8,5.2 5.7,10.7L4.1,10.7Z" fill="#e8141c" stroke="#e8141c" stroke-width="0.5" stroke-linejoin="round"/></g><rect x="9.5" y="421.5" width="8" height="8" fill="#fff" stroke="#dcdcdc" stroke-width="1"/><path d="M10.9,425.5h5.4M13.6,422.8v5.4" stroke="#111" stroke-width="1.2"/><path d="M19,425.5H23" stroke="#9a9a9a" stroke-width="1" stroke-dasharray="1 1"/><g transform="translate(39.2,417.4)"><path d="M0,2.016L4.2,4.032V8.736L0,6.720000000000001Z" fill="url(#gTl)" stroke="#b88608" stroke-width="0.7" stroke-linejoin="round"/><path d="M4.2,4.032L8.4,2.016V6.720000000000001L4.2,8.736Z" fill="url(#gTr)" stroke="#b88608" stroke-width="0.7" stroke-linejoin="round"/><path d="M0,2.016L4.2,0L8.4,2.016L4.2,4.032Z" fill="#fffbd0" stroke="#c89410" stroke-width="0.7" stroke-linejoin="round"/><path d="M0,8.216000000000001L4.2,10.232V14.936L0,12.920000000000002Z" fill="url(#gTl)" stroke="#b88608" stroke-width="0.7" stroke-linejoin="round"/><path d="M4.2,10.232L8.4,8.216000000000001V12.920000000000002L4.2,14.936Z" fill="url(#gTr)" stroke="#b88608" stroke-width="0.7" stroke-linejoin="round"/><path d="M0,8.216000000000001L4.2,6.2L8.4,8.216000000000001L4.2,10.232Z" fill="#fffbd0" stroke="#c89410" stroke-width="0.7" stroke-linejoin="round"/><path d="M6.4,8.616L10.600000000000001,10.632V15.336L6.4,13.32Z" fill="url(#gTl)" stroke="#b88608" stroke-width="0.7" stroke-linejoin="round"/><path d="M10.600000000000001,10.632L14.8,8.616V13.32L10.600000000000001,15.336Z" fill="url(#gTr)" stroke="#b88608" stroke-width="0.7" stroke-linejoin="round"/><path d="M6.4,8.616L10.600000000000001,6.6L14.8,8.616L10.600000000000001,10.632Z" fill="#fffbd0" stroke="#c89410" stroke-width="0.7" stroke-linejoin="round"/></g><g transform="translate(25,419)"><rect x="0.5" y="0.5" width="11" height="11" fill="#fff" stroke="#111" stroke-width="1"/><path d="M1.5,5.7L3.5,4.2L4.9,7.2Q7.2,3.2 10.9,1.1Q7.8,5.2 5.7,10.7L4.1,10.7Z" fill="#e8141c" stroke="#e8141c" stroke-width="0.5" stroke-linejoin="round"/></g><path d="M14,445.5H23" stroke="#9a9a9a" stroke-width="1" stroke-dasharray="1 1"/><g transform="translate(40.2,437.6)"><path d="M1,3.48L7.0,6.359999999999999V13.08L1,10.200000000000001Z" fill="url(#gTl)" stroke="#b88608" stroke-width="0.7" stroke-linejoin="round"/><path d="M7.0,6.359999999999999L13,3.48V10.200000000000001L7.0,13.08Z" fill="url(#gTr)" stroke="#b88608" stroke-width="0.7" stroke-linejoin="round"/><path d="M1,3.48L7.0,0.6L13,3.48L7.0,6.359999999999999Z" fill="#fffbd0" stroke="#c89410" stroke-width="0.7" stroke-linejoin="round"/></g><g transform="translate(25,439)"><rect x="0.5" y="0.5" width="11" height="11" fill="#fff" stroke="#111" stroke-width="1"/><path d="M1.5,5.7L3.5,4.2L4.9,7.2Q7.2,3.2 10.9,1.1Q7.8,5.2 5.7,10.7L4.1,10.7Z" fill="#e8141c" stroke="#e8141c" stroke-width="0.5" stroke-linejoin="round"/></g><rect x="9.5" y="461.5" width="8" height="8" fill="#fff" stroke="#dcdcdc" stroke-width="1"/><path d="M10.9,465.5h5.4M13.6,462.8v5.4" stroke="#111" stroke-width="1.2"/><path d="M19,465.5H23" stroke="#9a9a9a" stroke-width="1" stroke-dasharray="1 1"/><g transform="translate(39.2,457.4)"><path d="M0,2.016L4.2,4.032V8.736L0,6.720000000000001Z" fill="url(#gTl)" stroke="#b88608" stroke-width="0.7" stroke-linejoin="round"/><path d="M4.2,4.032L8.4,2.016V6.720000000000001L4.2,8.736Z" fill="url(#gTr)" stroke="#b88608" stroke-width="0.7" stroke-linejoin="round"/><path d="M0,2.016L4.2,0L8.4,2.016L4.2,4.032Z" fill="#fffbd0" stroke="#c89410" stroke-width="0.7" stroke-linejoin="round"/><path d="M0,8.216000000000001L4.2,10.232V14.936L0,12.920000000000002Z" fill="url(#gTl)" stroke="#b88608" stroke-width="0.7" stroke-linejoin="round"/><path d="M4.2,10.232L8.4,8.216000000000001V12.920000000000002L4.2,14.936Z" fill="url(#gTr)" stroke="#b88608" stroke-width="0.7" stroke-linejoin="round"/><path d="M0,8.216000000000001L4.2,6.2L8.4,8.216000000000001L4.2,10.232Z" fill="#fffbd0" stroke="#c89410" stroke-width="0.7" stroke-linejoin="round"/><path d="M6.4,8.616L10.600000000000001,10.632V15.336L6.4,13.32Z" fill="url(#gTl)" stroke="#b88608" stroke-width="0.7" stroke-linejoin="round"/><path d="M10.600000000000001,10.632L14.8,8.616V13.32L10.600000000000001,15.336Z" fill="url(#gTr)" stroke="#b88608" stroke-width="0.7" stroke-linejoin="round"/><path d="M6.4,8.616L10.600000000000001,6.6L14.8,8.616L10.600000000000001,10.632Z" fill="#fffbd0" stroke="#c89410" stroke-width="0.7" stroke-linejoin="round"/></g><g transform="translate(25,459)"><rect x="0.5" y="0.5" width="11" height="11" fill="#fff" stroke="#111" stroke-width="1"/><path d="M1.5,5.7L3.5,4.2L4.9,7.2Q7.2,3.2 10.9,1.1Q7.8,5.2 5.7,10.7L4.1,10.7Z" fill="#e8141c" stroke="#e8141c" stroke-width="0.5" stroke-linejoin="round"/></g><path d="M14,485.5H23" stroke="#9a9a9a" stroke-width="1" stroke-dasharray="1 1"/><g transform="translate(40.2,477.6)"><path d="M1,3.48L7.0,6.359999999999999V13.08L1,10.200000000000001Z" fill="url(#gTl)" stroke="#b88608" stroke-width="0.7" stroke-linejoin="round"/><path d="M7.0,6.359999999999999L13,3.48V10.200000000000001L7.0,13.08Z" fill="url(#gTr)" stroke="#b88608" stroke-width="0.7" stroke-linejoin="round"/><path d="M1,3.48L7.0,0.6L13,3.48L7.0,6.359999999999999Z" fill="#fffbd0" stroke="#c89410" stroke-width="0.7" stroke-linejoin="round"/></g><g transform="translate(25,479)"><rect x="0.5" y="0.5" width="11" height="11" fill="#fff" stroke="#111" stroke-width="1"/><path d="M1.5,5.7L3.5,4.2L4.9,7.2Q7.2,3.2 10.9,1.1Q7.8,5.2 5.7,10.7L4.1,10.7Z" fill="#e8141c" stroke="#e8141c" stroke-width="0.5" stroke-linejoin="round"/></g><path d="M14,505.5H23" stroke="#9a9a9a" stroke-width="1" stroke-dasharray="1 1"/><g transform="translate(40.2,497.6)"><path d="M1,3.48L7.0,6.359999999999999V13.08L1,10.200000000000001Z" fill="url(#gTl)" stroke="#b88608" stroke-width="0.7" stroke-linejoin="round"/><path d="M7.0,6.359999999999999L13,3.48V10.200000000000001L7.0,13.08Z" fill="url(#gTr)" stroke="#b88608" stroke-width="0.7" stroke-linejoin="round"/><path d="M1,3.48L7.0,0.6L13,3.48L7.0,6.359999999999999Z" fill="#fffbd0" stroke="#c89410" stroke-width="0.7" stroke-linejoin="round"/></g><g transform="translate(25,499)"><rect x="0.5" y="0.5" width="11" height="11" fill="#fff" stroke="#111" stroke-width="1"/><path d="M1.5,5.7L3.5,4.2L4.9,7.2Q7.2,3.2 10.9,1.1Q7.8,5.2 5.7,10.7L4.1,10.7Z" fill="#e8141c" stroke="#e8141c" stroke-width="0.5" stroke-linejoin="round"/></g><path d="M14,525.5H23" stroke="#9a9a9a" stroke-width="1" stroke-dasharray="1 1"/><g transform="translate(40.2,517.6)"><path d="M1,3.48L7.0,6.359999999999999V13.08L1,10.200000000000001Z" fill="url(#gTl)" stroke="#b88608" stroke-width="0.7" stroke-linejoin="round"/><path d="M7.0,6.359999999999999L13,3.48V10.200000000000001L7.0,13.08Z" fill="url(#gTr)" stroke="#b88608" stroke-width="0.7" stroke-linejoin="round"/><path d="M1,3.48L7.0,0.6L13,3.48L7.0,6.359999999999999Z" fill="#fffbd0" stroke="#c89410" stroke-width="0.7" stroke-linejoin="round"/></g><g transform="translate(25,519)"><rect x="0.5" y="0.5" width="11" height="11" fill="#fff" stroke="#111" stroke-width="1"/><path d="M1.5,5.7L3.5,4.2L4.9,7.2Q7.2,3.2 10.9,1.1Q7.8,5.2 5.7,10.7L4.1,10.7Z" fill="#e8141c" stroke="#e8141c" stroke-width="0.5" stroke-linejoin="round"/></g><path d="M14,545.5H23" stroke="#9a9a9a" stroke-width="1" stroke-dasharray="1 1"/><g transform="translate(40.2,537.6)"><path d="M1,3.48L7.0,6.359999999999999V13.08L1,10.200000000000001Z" fill="url(#gTl)" stroke="#b88608" stroke-width="0.7" stroke-linejoin="round"/><path d="M7.0,6.359999999999999L13,3.48V10.200000000000001L7.0,13.08Z" fill="url(#gTr)" stroke="#b88608" stroke-width="0.7" stroke-linejoin="round"/><path d="M1,3.48L7.0,0.6L13,3.48L7.0,6.359999999999999Z" fill="#fffbd0" stroke="#c89410" stroke-width="0.7" stroke-linejoin="round"/></g><g transform="translate(25,539)"><rect x="0.5" y="0.5" width="11" height="11" fill="#fff" stroke="#111" stroke-width="1"/><path d="M1.5,5.7L3.5,4.2L4.9,7.2Q7.2,3.2 10.9,1.1Q7.8,5.2 5.7,10.7L4.1,10.7Z" fill="#e8141c" stroke="#e8141c" stroke-width="0.5" stroke-linejoin="round"/></g><path d="M14,565.5H23" stroke="#9a9a9a" stroke-width="1" stroke-dasharray="1 1"/><g transform="translate(40.2,557.6)"><path d="M1,3.48L7.0,6.359999999999999V13.08L1,10.200000000000001Z" fill="url(#gTl)" stroke="#b88608" stroke-width="0.7" stroke-linejoin="round"/><path d="M7.0,6.359999999999999L13,3.48V10.200000000000001L7.0,13.08Z" fill="url(#gTr)" stroke="#b88608" stroke-width="0.7" stroke-linejoin="round"/><path d="M1,3.48L7.0,0.6L13,3.48L7.0,6.359999999999999Z" fill="#fffbd0" stroke="#c89410" stroke-width="0.7" stroke-linejoin="round"/></g><g transform="translate(25,559)"><rect x="0.5" y="0.5" width="11" height="11" fill="#fff" stroke="#111" stroke-width="1"/><path d="M1.5,5.7L3.5,4.2L4.9,7.2Q7.2,3.2 10.9,1.1Q7.8,5.2 5.7,10.7L4.1,10.7Z" fill="#e8141c" stroke="#e8141c" stroke-width="0.5" stroke-linejoin="round"/></g><rect x="92" y="155" width="16.4" height="420" fill="#f0f0f0"/><rect x="92" y="380" width="15" height="161" fill="#c9c9c9"/><path d="M96.4,166.6L99.7,162.4L103,166.6" fill="none" stroke="#606060" stroke-width="2"/><path d="M96.4,564L99.7,568.2L103,564" fill="none" stroke="#606060" stroke-width="2"/><rect x="0" y="574.5" width="108.4" height="18" fill="#f0f0f0"/><rect x="2" y="576" width="17" height="15" fill="#c9c9c9"/><path d="M81,580.2L84.6,583.5L81,586.8" fill="none" stroke="#606060" stroke-width="2"/><rect x="-1" y="594.5" width="110.5" height="4" fill="#dadada" stroke="#b4b4b4" stroke-width="0.8"/><rect x="109" y="133" width="1" height="462" fill="#e0e0e0"/><defs><linearGradient id="ax" x1="0" y1="0" x2="0" y2="1"><stop offset="0" stop-color="#ffd21e"/><stop offset="0.47" stop-color="#ffbe10"/><stop offset="0.5" stop-color="#7a4800"/><stop offset="1" stop-color="#6e4000"/></linearGradient></defs><rect x="470.8" y="392" width="15.2" height="50.4" rx="1.6" fill="#5a3400"/><rect x="471.40000000000003" y="392.5" width="14.0" height="4.7" fill="#ffb010"/><rect x="471.40000000000003" y="398.1" width="14.0" height="4.7" fill="#ffd21e"/><rect x="471.40000000000003" y="403.7" width="14.0" height="4.7" fill="#ffd21e"/><rect x="471.40000000000003" y="409.3" width="14.0" height="4.7" fill="#ffc010"/><rect x="471.40000000000003" y="414.9" width="14.0" height="4.7" fill="#f0a008"/><rect x="471.40000000000003" y="420.5" width="14.0" height="4.7" fill="#c88408"/><rect x="471.40000000000003" y="426.1" width="14.0" height="4.7" fill="#9a6204"/><rect x="471.40000000000003" y="431.7" width="14.0" height="4.7" fill="#6a4000"/><rect x="471.40000000000003" y="437.3" width="14.0" height="4.7" fill="#4a2c00"/><rect x="470.8" y="392" width="15.2" height="50.4" rx="1.6" fill="none" stroke="#3a2608" stroke-width="0.7"/><rect x="467.6" y="415.0" width="3.2" height="4.4" fill="#ffb010" stroke="#3a2608" stroke-width="0.6"/><rect x="743" y="392" width="15.4" height="50.4" rx="1.6" fill="#5a3400"/><rect x="743.6" y="392.5" width="14.2" height="4.7" fill="#ffb010"/><rect x="743.6" y="398.1" width="14.2" height="4.7" fill="#ffd21e"/><rect x="743.6" y="403.7" width="14.2" height="4.7" fill="#ffd21e"/><rect x="743.6" y="409.3" width="14.2" height="4.7" fill="#ffc010"/><rect x="743.6" y="414.9" width="14.2" height="4.7" fill="#f0a008"/><rect x="743.6" y="420.5" width="14.2" height="4.7" fill="#c88408"/><rect x="743.6" y="426.1" width="14.2" height="4.7" fill="#9a6204"/><rect x="743.6" y="431.7" width="14.2" height="4.7" fill="#6a4000"/><rect x="743.6" y="437.3" width="14.2" height="4.7" fill="#4a2c00"/><rect x="743" y="392" width="15.4" height="50.4" rx="1.6" fill="none" stroke="#3a2608" stroke-width="0.7"/><rect x="758.4" y="415.0" width="3.2" height="4.4" fill="#ffb010" stroke="#3a2608" stroke-width="0.6"/><rect x="511.4" y="288.7" width="206.6" height="71.5" fill="#ffa40c" stroke="#3a2608" stroke-width="0.6"/><path d="M511.4,339H583M646,339H718M511.4,350H718M521,339V360.2M522.6,339V360.2M708,339V360.2M706.4,339V360.2M558,350V360.2M565,350V360.2M568,350V360.2M568,354H661M661,350V360.2M664,350V360.2M671,350V360.2" stroke="#3a2608" stroke-width="0.6" fill="none"/><rect x="606.0" y="327.0" width="20.7" height="22.4" fill="#ffa40c" stroke="#3a2608" stroke-width="0.6"/><path d="M600,342.6H606M626.7,342.6H634M600,342.6V349.4H634V342.6" stroke="#3a2608" stroke-width="0.6" fill="none"/><circle cx="615.8" cy="337.2" r="2.5" fill="#ffb63a" stroke="#3a2608" stroke-width="0.7"/><rect x="583.6" y="332.0" width="8.4" height="52.0" fill="#ffa40c" stroke="#3a2608" stroke-width="0.6"/><rect x="582.0" y="331.0" width="8.0" height="13.0" fill="#ffa40c" stroke="#3a2608" stroke-width="0.6"/><rect x="590.0" y="332.0" width="9.0" height="10.0" fill="#ffb41e" stroke="#3a2608" stroke-width="0.6"/><rect x="595.0" y="332.0" width="4.0" height="10.0" fill="#d88a06" stroke="#3a2608" stroke-width="0.6"/><rect x="599.0" y="335.6" width="7.0" height="3.4" fill="#ffb41e" stroke="#3a2608" stroke-width="0.6"/><rect x="637.1" y="332.0" width="8.4" height="52.0" fill="#ffa40c" stroke="#3a2608" stroke-width="0.6"/><rect x="639.1" y="331.0" width="8.0" height="13.0" fill="#ffa40c" stroke="#3a2608" stroke-width="0.6"/><rect x="630.1" y="332.0" width="9.0" height="10.0" fill="#ffb41e" stroke="#3a2608" stroke-width="0.6"/><rect x="630.1" y="332.0" width="4.0" height="10.0" fill="#d88a06" stroke="#3a2608" stroke-width="0.6"/><rect x="623.1" y="335.6" width="7.0" height="3.4" fill="#ffb41e" stroke="#3a2608" stroke-width="0.6"/><rect x="518.0" y="360.2" width="5.0" height="9.2" fill="#ffa40c" stroke="#3a2608" stroke-width="0.6"/><rect x="515.6" y="365.0" width="9.8" height="4.4" fill="#e89a0a" stroke="#3a2608" stroke-width="0.6"/><rect x="706.6" y="360.2" width="5.0" height="9.2" fill="#ffa40c" stroke="#3a2608" stroke-width="0.6"/><rect x="704.2" y="365.0" width="9.8" height="4.4" fill="#e89a0a" stroke="#3a2608" stroke-width="0.6"/><rect x="482" y="369.6" width="98" height="14.6" fill="url(#ax)" stroke="#3a2608" stroke-width="0.5"/><rect x="645" y="369.6" width="103" height="14.6" fill="url(#ax)" stroke="#3a2608" stroke-width="0.5"/><rect x="515.6" y="384.0" width="9.8" height="3.4" fill="#c88408" stroke="#3a2608" stroke-width="0.6"/><rect x="704.2" y="384.0" width="9.8" height="3.4" fill="#c88408" stroke="#3a2608" stroke-width="0.6"/><circle cx="707" cy="367" r="1.1" fill="#2ab03a"/><circle cx="711.6" cy="367" r="1.1" fill="#2ab03a"/><circle cx="707" cy="386" r="1.1" fill="#2ab03a"/><circle cx="711.6" cy="386" r="1.1" fill="#2ab03a"/><rect x="497.6" y="365.6" width="3.4" height="22.8" fill="#ffb41a" stroke="#3a2608" stroke-width="0.6"/><rect x="536.4" y="365.6" width="3.4" height="22.8" fill="#ffb41a" stroke="#3a2608" stroke-width="0.6"/><rect x="575.6" y="365.6" width="3.4" height="22.8" fill="#ffb41a" stroke="#3a2608" stroke-width="0.6"/><rect x="650.6" y="365.6" width="3.4" height="22.8" fill="#ffb41a" stroke="#3a2608" stroke-width="0.6"/><rect x="689.6" y="365.6" width="3.4" height="22.8" fill="#ffb41a" stroke="#3a2608" stroke-width="0.6"/><rect x="728.6" y="365.6" width="3.4" height="22.8" fill="#ffb41a" stroke="#3a2608" stroke-width="0.6"/><rect x="578.6" y="371.0" width="13.4" height="11.4" fill="#ffae12" stroke="#3a2608" stroke-width="0.6"/><rect x="637.0" y="371.0" width="13.0" height="11.4" fill="#ffae12" stroke="#3a2608" stroke-width="0.6"/><rect x="549.4" y="365.0" width="11.2" height="22.0" fill="#ffb818" stroke="#3a2608" stroke-width="0.6"/><rect x="549.4" y="376.6" width="11.2" height="10.4" fill="#7a4800" stroke="#3a2608" stroke-width="0.6"/><rect x="549.8" y="364.4" width="2.4" height="2.4" rx="0.8" fill="#d8d8d8" stroke="#2a2a2a" stroke-width="0.5"/><rect x="557.8" y="364.4" width="2.4" height="2.4" rx="0.8" fill="#d8d8d8" stroke="#2a2a2a" stroke-width="0.5"/><rect x="549.8" y="385.2" width="2.4" height="2.4" rx="0.8" fill="#d8d8d8" stroke="#2a2a2a" stroke-width="0.5"/><rect x="557.8" y="385.2" width="2.4" height="2.4" rx="0.8" fill="#d8d8d8" stroke="#2a2a2a" stroke-width="0.5"/><rect x="668.6" y="365.0" width="11.2" height="22.0" fill="#ffb818" stroke="#3a2608" stroke-width="0.6"/><rect x="668.6" y="376.6" width="11.2" height="10.4" fill="#7a4800" stroke="#3a2608" stroke-width="0.6"/><rect x="669.0" y="364.4" width="2.4" height="2.4" rx="0.8" fill="#d8d8d8" stroke="#2a2a2a" stroke-width="0.5"/><rect x="677.0" y="364.4" width="2.4" height="2.4" rx="0.8" fill="#d8d8d8" stroke="#2a2a2a" stroke-width="0.5"/><rect x="669.0" y="385.2" width="2.4" height="2.4" rx="0.8" fill="#d8d8d8" stroke="#2a2a2a" stroke-width="0.5"/><rect x="677.0" y="385.2" width="2.4" height="2.4" rx="0.8" fill="#d8d8d8" stroke="#2a2a2a" stroke-width="0.5"/><rect x="552.0" y="387.0" width="6.4" height="53.0" fill="#ffa40c" stroke="#3a2608" stroke-width="0.6"/><rect x="671.0" y="387.0" width="6.6" height="53.0" fill="#ffa40c" stroke="#3a2608" stroke-width="0.6"/><path d="M546.4,445L552,439.6H558.4L564,445Z" fill="#ffa40c" stroke="#3a2608" stroke-width="0.6"/><path d="M665,445L671,439.6H677.6L683,445Z" fill="#ffa40c" stroke="#3a2608" stroke-width="0.6"/><circle cx="555" cy="432.6" r="1" fill="#2ab03a"/><circle cx="555" cy="436.4" r="1" fill="#2ab03a"/><circle cx="674.2" cy="432.6" r="0.9" fill="#4a3a20"/><circle cx="674.2" cy="436.4" r="0.9" fill="#4a3a20"/><rect x="482.0" y="366.4" width="16.0" height="20.6" fill="#ffb010" stroke="#3a2608" stroke-width="0.6"/><rect x="731.0" y="366.4" width="17.0" height="20.6" fill="#ffb010" stroke="#3a2608" stroke-width="0.6"/><rect x="482.0" y="377.0" width="16.0" height="10.0" fill="#8a5400" stroke="none" stroke-width="0.6"/><rect x="731.0" y="377.0" width="17.0" height="10.0" fill="#8a5400" stroke="none" stroke-width="0.6"/><rect x="482.4" y="366.8" width="2.2" height="2.2" rx="0.8" fill="#d8d8d8" stroke="#2a2a2a" stroke-width="0.5"/><rect x="495" y="366.8" width="2.2" height="2.2" rx="0.8" fill="#d8d8d8" stroke="#2a2a2a" stroke-width="0.5"/><rect x="482.4" y="384.4" width="2.2" height="2.2" rx="0.8" fill="#d8d8d8" stroke="#2a2a2a" stroke-width="0.5"/><rect x="495" y="384.4" width="2.2" height="2.2" rx="0.8" fill="#d8d8d8" stroke="#2a2a2a" stroke-width="0.5"/><rect x="731.4" y="366.8" width="2.2" height="2.2" rx="0.8" fill="#d8d8d8" stroke="#2a2a2a" stroke-width="0.5"/><rect x="745.2" y="366.8" width="2.2" height="2.2" rx="0.8" fill="#d8d8d8" stroke="#2a2a2a" stroke-width="0.5"/><rect x="731.4" y="384.4" width="2.2" height="2.2" rx="0.8" fill="#d8d8d8" stroke="#2a2a2a" stroke-width="0.5"/><rect x="745.2" y="384.4" width="2.2" height="2.2" rx="0.8" fill="#d8d8d8" stroke="#2a2a2a" stroke-width="0.5"/><rect x="488.4" y="363.0" width="5.2" height="78.4" fill="#ffa40c" stroke="#3a2608" stroke-width="0.6"/><rect x="735.6" y="363.0" width="5.4" height="78.4" fill="#ffa40c" stroke="#3a2608" stroke-width="0.6"/><rect x="486.5" y="372.0" width="11.1" height="8.4" fill="#ffb010" stroke="#3a2608" stroke-width="0.6"/><rect x="731.6" y="372.0" width="11.4" height="8.4" fill="#ffb010" stroke="#3a2608" stroke-width="0.6"/><rect x="488.0" y="413.0" width="7.6" height="8.0" fill="#ffa40c" stroke="#3a2608" stroke-width="0.6"/><rect x="733.6" y="413.0" width="7.4" height="8.0" fill="#ffa40c" stroke="#3a2608" stroke-width="0.6"/><rect x="486.4" y="432" width="3.4" height="2" fill="#1a1208"/><rect x="486.4" y="435.6" width="3.4" height="2" fill="#1a1208"/><rect x="739.6" y="432" width="3.4" height="2" fill="#1a1208"/><rect x="739.6" y="435.6" width="3.4" height="2" fill="#1a1208"/><path d="M479,446.2L485.4,441.2H493L496.6,446.2Z" fill="#ffa40c" stroke="#3a2608" stroke-width="0.6"/><path d="M732.4,446.2L736,441.2H743.6L750,446.2Z" fill="#ffa40c" stroke="#3a2608" stroke-width="0.6"/><path d="M484,357H499L494,363.2H489Z" fill="#ffa40c" stroke="#3a2608" stroke-width="0.6"/><path d="M730,357H745.6L741,363.2H735.6Z" fill="#ffa40c" stroke="#3a2608" stroke-width="0.6"/><path d="M484,357.2H499M730,357.2H745.6" stroke="#8a5a08" stroke-width="1.2"/><path d="M486,345.6V357M743,345.6V357" stroke="#f08c08" stroke-width="1.3"/><ellipse cx="596.6" cy="376.2" rx="4.6" ry="10.8" fill="#5e6a70" stroke="#2a2a2a" stroke-width="0.8"/><ellipse cx="597.8000000000001" cy="376.2" rx="3.2" ry="8" fill="#8a969c" stroke="#3a3a3a" stroke-width="0.6"/><ellipse cx="598.6" cy="376.2" rx="1.8" ry="4.4" fill="#c4cacc" stroke="#4a4a4a" stroke-width="0.5"/><ellipse cx="632.4" cy="376.2" rx="4.6" ry="10.8" fill="#5e6a70" stroke="#2a2a2a" stroke-width="0.8"/><ellipse cx="631.1999999999999" cy="376.2" rx="3.2" ry="8" fill="#8a969c" stroke="#3a3a3a" stroke-width="0.6"/><ellipse cx="630.4" cy="376.2" rx="1.8" ry="4.4" fill="#c4cacc" stroke="#4a4a4a" stroke-width="0.5"/><path d="M664.4,346.8L667.4,350L664.4,353.2L661.4,350Z" fill="#18a8a8"/><circle cx="614.4" cy="350" r="0.9" fill="#18a8a8"/><rect x="165.4" y="538.7" width="17" height="18" fill="#d0d0d0" stroke="#bcbcbc" stroke-width="0.8"/><path d="M164.4,538V555" stroke="#a4b0ee" stroke-width="1"/><path d="M166,556.8H183" stroke="#8aa88a" stroke-width="1.2"/><path d="M164.4,529V538.4" stroke="#1a3af0" stroke-width="2"/><path d="M162.2,532.6L164.4,527L166.6,532.6Z" fill="#1a3af0"/><path d="M183,556.8H191" stroke="#2a9a2a" stroke-width="2"/><path d="M188.6,554.4L194.4,556.8L188.6,559.2Z" fill="#2a9a2a"/><circle cx="164.1" cy="556.9" r="3.4" fill="#c4c4c4"/><path d="M161.6,553.6L166.6,560.2M166.6,553.6L161.6,560.2" stroke="#e02a2a" stroke-width="1.3"/><text x="160.8" y="526.4" font-family="Liberation Sans, sans-serif" font-size="11" fill="#2a3af8">Z</text><text x="196" y="561.4" font-family="Liberation Sans, sans-serif" font-size="11" fill="#2a9a3a">Y</text></svg>
</body>
</html>
